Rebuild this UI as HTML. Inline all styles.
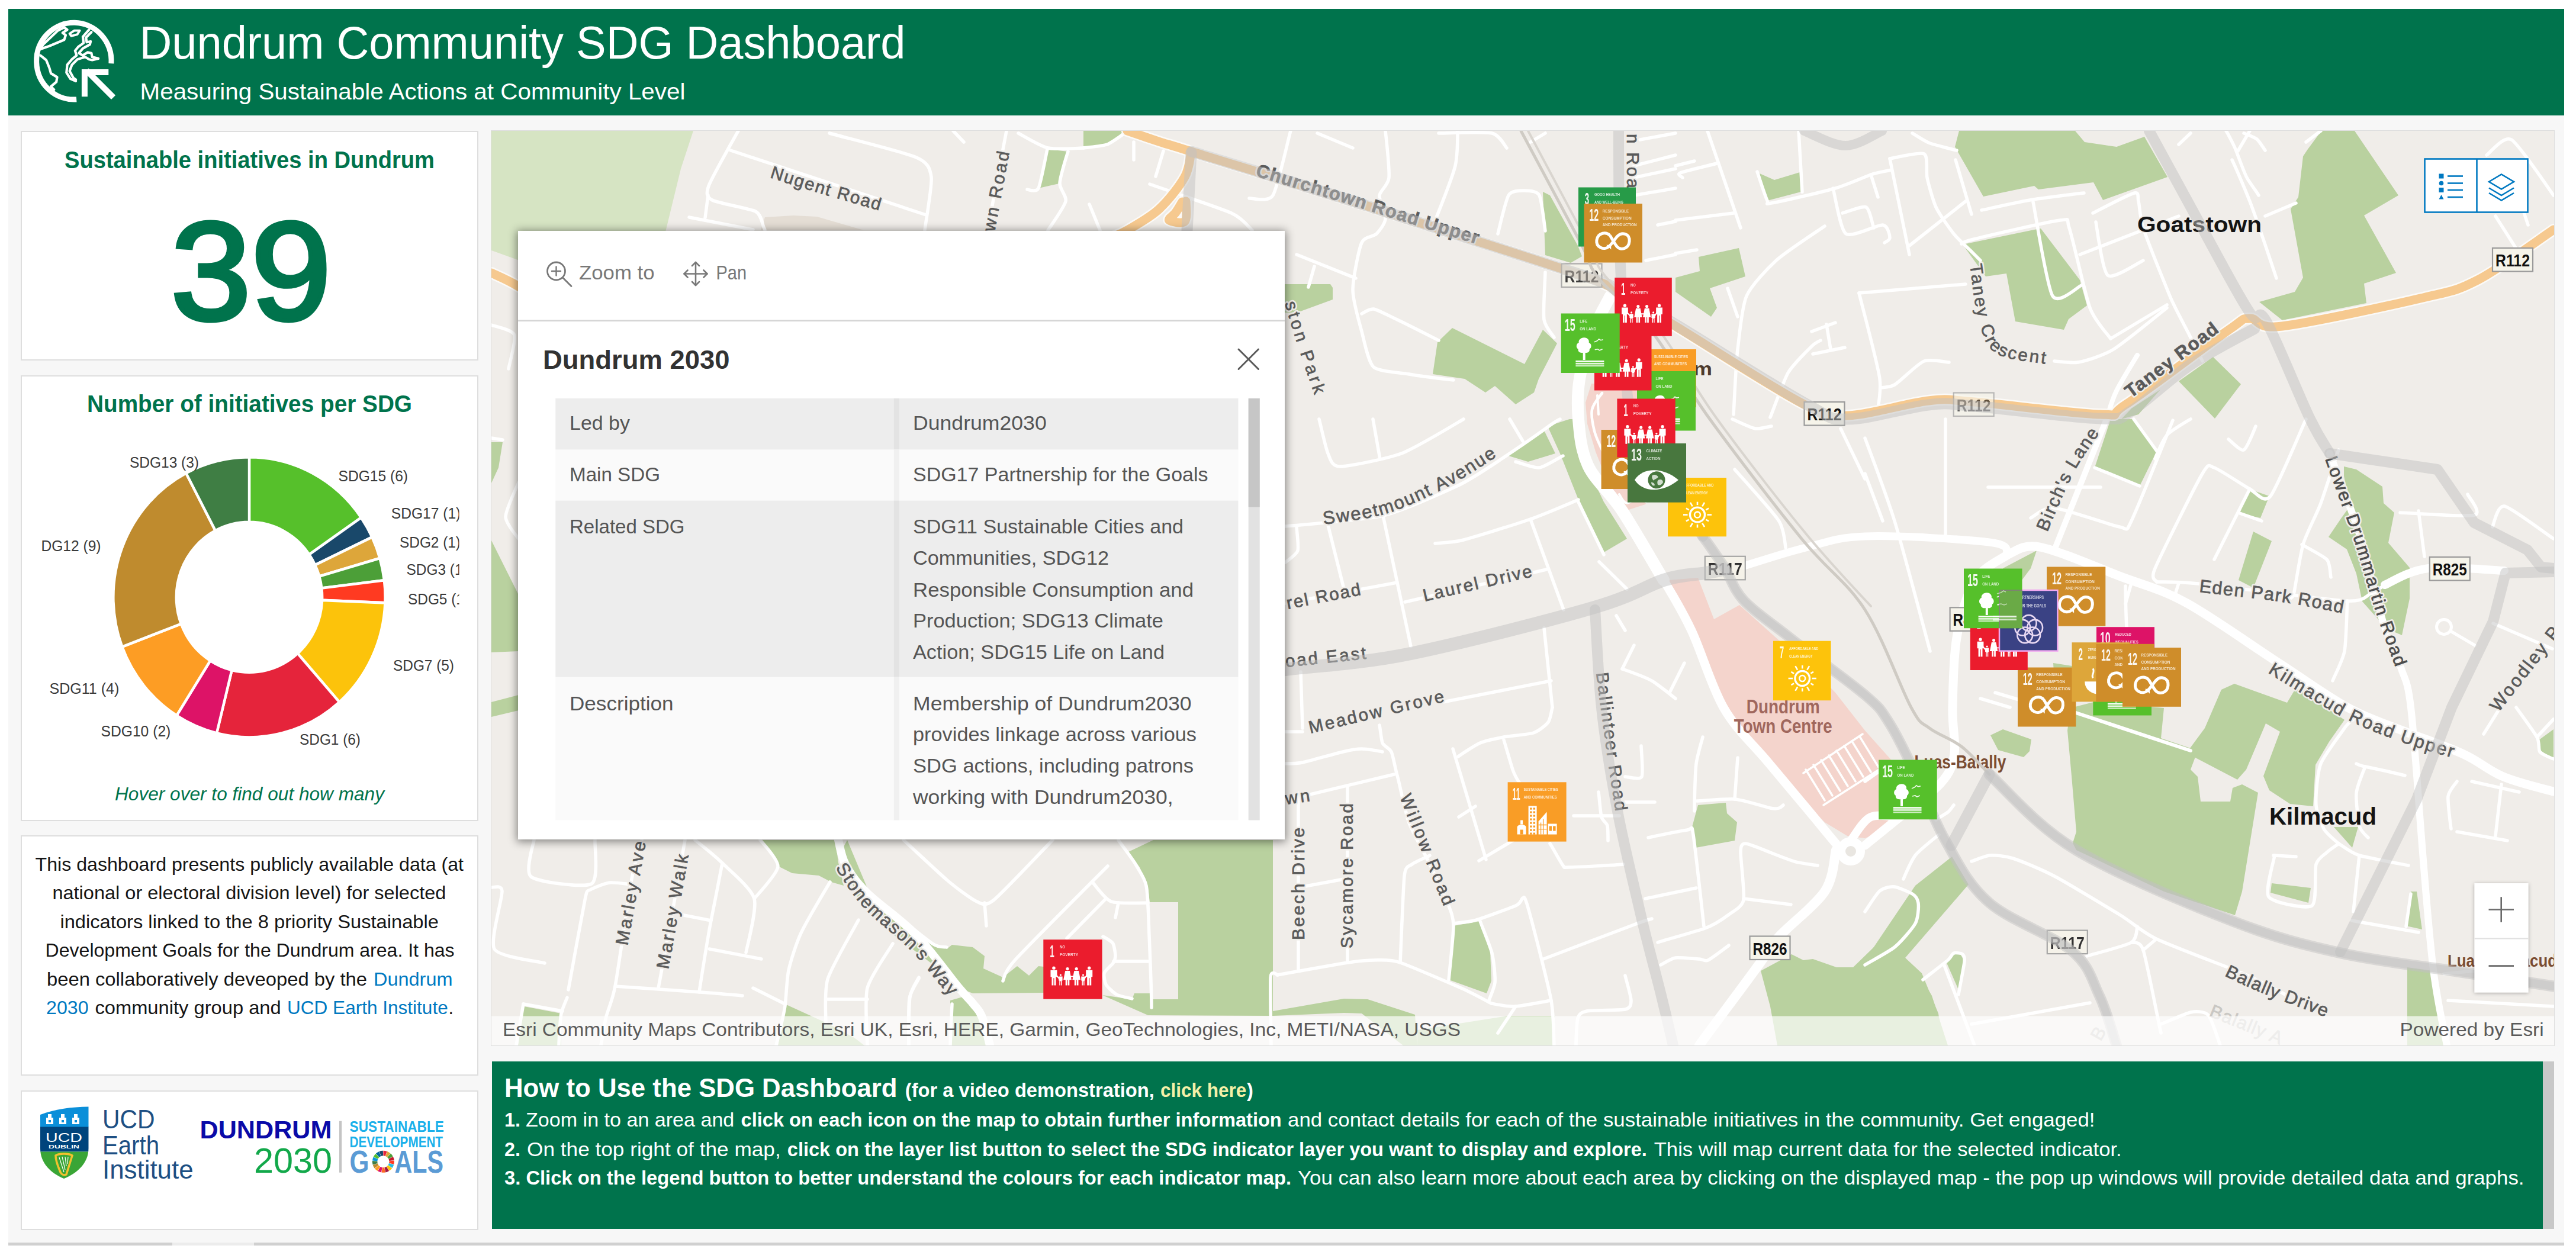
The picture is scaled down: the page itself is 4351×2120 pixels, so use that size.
<!DOCTYPE html><html lang="en"><head><meta charset="utf-8"><title>Dundrum Community SDG Dashboard</title><style>html,body{margin:0;padding:0;background:#fff}
body{width:4351px;height:2120px;font-family:"Liberation Sans",sans-serif}
#page{position:relative;width:4351px;height:2120px;overflow:hidden;background:#fff}
#dash{position:absolute;left:14px;top:15px;width:4317px;height:2084px;background:#f7f7f7}
.card{position:absolute;background:#fff;border:2px solid #dedede}
svg text{font-family:"Liberation Sans",sans-serif;white-space:pre}
</style></head><body>
<div id="page">
<div id="dash"></div>
<div id="hdr" style="position:absolute;left:14px;top:15px;width:4317px;height:180px;background:#00734c"></div>
<svg style="position:absolute;left:0;top:0" width="4351" height="200" viewBox="0 0 4351 200"><path d="M187.9,107.2 A63.2,64.9 0 1 0 129.2,167.9" fill="none" stroke="#fff" stroke-width="9"/><g fill="none" stroke="#fff" stroke-width="4.2" stroke-linecap="round" stroke-linejoin="round"><polygon points="72.9,75.2 97.8,51.6 108.4,46.3 113.6,50.2 105.7,55.5 111.0,59.4 108.4,67.3 83.4,77.8 68.3,83.1"/><polygon points="117.6,56.8 125.5,51.6 134.7,51.6 130.7,58.1 120.2,60.8" stroke-width="3.8"/><polyline points="150.4,50.2 139.9,62.1 141.2,72.6 132.0,79.2 126.8,85.7 129.4,93.6 121.5,100.2 113.6,109.4 112.3,122.6 118.9,133.1 128.1,137.0"/><polyline points="154.4,54.2 145.2,63.4 146.5,71.3 153.1,70.0 151.8,75.2 139.9,81.8 133.3,89.7 139.9,93.6 147.8,88.4 154.4,89.7 155.7,96.3 166.2,98.9 155.7,101.5 150.4,100.2 143.9,96.3 130.7,100.2 121.5,109.4 117.6,119.9 124.1,131.8 128.1,134.4"/><polyline points="68.3,93.6 78.1,101.5 83.4,114.7 86.0,123.9 96.5,130.4 95.2,138.3 86.0,146.2 91.3,151.5"/></g><g fill="none" stroke="#fff" stroke-width="10" stroke-linecap="butt" stroke-linejoin="miter"><path d="M191.5,164.5 L146,119"/><path d="M183.3,121.9 L142.9,121.9 L142.9,163.3"/></g><text x="235.5" y="98.8" font-size="78" fill="#fff" textLength="1294.0" lengthAdjust="spacingAndGlyphs">Dundrum Community SDG Dashboard</text><text x="236.5" y="167.7" font-size="39.5" fill="#fff" textLength="921.0" lengthAdjust="spacingAndGlyphs">Measuring Sustainable Actions at Community Level</text></svg>
<div id="c1" class="card" style="left:35px;top:221px;width:769px;height:384px"></div>
<div id="c2" class="card" style="left:35px;top:634px;width:769px;height:749px"></div>
<div id="c3" class="card" style="left:35px;top:1411px;width:769px;height:402px"></div>
<div id="c4" class="card" style="left:35px;top:1842px;width:769px;height:232px"></div>
<svg style="position:absolute;left:0;top:200px" width="830" height="1920" viewBox="0 200 830 1920"><text x="109.0" y="284.0" font-size="40" fill="#00734c" font-weight="700" textLength="625.0" lengthAdjust="spacingAndGlyphs">Sustainable initiatives in Dundrum</text><text x="288.5" y="539.5" font-size="236" fill="#00734c" textLength="271.0" lengthAdjust="spacingAndGlyphs" stroke="#00734c" stroke-width="7">39</text><text x="147.0" y="695.5" font-size="40" fill="#00734c" font-weight="700" textLength="549.0" lengthAdjust="spacingAndGlyphs">Number of initiatives per SDG</text><clipPath id="dclip"><rect x="69" y="740" width="706.5" height="560"/></clipPath><g clip-path="url(#dclip)"><g transform="translate(421,1008.8) scale(0.9854,1.0155)"><path d="M0.0,-233.0 A233,233 0 0 1 191.8,-132.4 L102.9,-71.0 A125,125 0 0 0 0.0,-125.0 Z" fill="#56c02b" stroke="#fff" stroke-width="4.5" stroke-linejoin="round"/><path d="M191.8,-132.4 A233,233 0 0 1 210.5,-99.9 L112.9,-53.6 A125,125 0 0 0 102.9,-71.0 Z" fill="#19486a" stroke="#fff" stroke-width="4.5" stroke-linejoin="round"/><path d="M210.5,-99.9 A233,233 0 0 1 223.8,-64.8 L120.1,-34.8 A125,125 0 0 0 112.9,-53.6 Z" fill="#dda63a" stroke="#fff" stroke-width="4.5" stroke-linejoin="round"/><path d="M223.8,-64.8 A233,233 0 0 1 231.3,-28.1 L124.1,-15.1 A125,125 0 0 0 120.1,-34.8 Z" fill="#4c9f38" stroke="#fff" stroke-width="4.5" stroke-linejoin="round"/><path d="M231.3,-28.1 A233,233 0 0 1 232.8,9.4 L124.9,5.0 A125,125 0 0 0 124.1,-15.1 Z" fill="#ff3a21" stroke="#fff" stroke-width="4.5" stroke-linejoin="round"/><path d="M232.8,9.4 A233,233 0 0 1 154.5,174.4 L82.9,93.6 A125,125 0 0 0 124.9,5.0 Z" fill="#fcc30b" stroke="#fff" stroke-width="4.5" stroke-linejoin="round"/><path d="M154.5,174.4 A233,233 0 0 1 -55.8,226.2 L-29.9,121.4 A125,125 0 0 0 82.9,93.6 Z" fill="#e5243b" stroke="#fff" stroke-width="4.5" stroke-linejoin="round"/><path d="M-55.8,226.2 A233,233 0 0 1 -124.5,196.9 L-66.8,105.6 A125,125 0 0 0 -29.9,121.4 Z" fill="#dd1367" stroke="#fff" stroke-width="4.5" stroke-linejoin="round"/><path d="M-124.5,196.9 A233,233 0 0 1 -217.9,82.6 L-116.9,44.3 A125,125 0 0 0 -66.8,105.6 Z" fill="#fd9d24" stroke="#fff" stroke-width="4.5" stroke-linejoin="round"/><path d="M-217.9,82.6 A233,233 0 0 1 -108.3,-206.3 L-58.1,-110.7 A125,125 0 0 0 -116.9,44.3 Z" fill="#bf8b2e" stroke="#fff" stroke-width="4.5" stroke-linejoin="round"/><path d="M-108.3,-206.3 A233,233 0 0 1 -0.0,-233.0 L-0.0,-125.0 A125,125 0 0 0 -58.1,-110.7 Z" fill="#3f7e44" stroke="#fff" stroke-width="4.5" stroke-linejoin="round"/></g><text x="219.0" y="789.6" font-size="25" fill="#3a3a3a" textLength="117.0" lengthAdjust="spacingAndGlyphs">SDG13 (3)</text><text x="571.5" y="813.0" font-size="25" fill="#3a3a3a" textLength="117.5" lengthAdjust="spacingAndGlyphs">SDG15 (6)</text><text x="660.8" y="876.0" font-size="25" fill="#3a3a3a" textLength="117.5" lengthAdjust="spacingAndGlyphs">SDG17 (1)</text><text x="675.0" y="924.5" font-size="25" fill="#3a3a3a" textLength="103.0" lengthAdjust="spacingAndGlyphs">SDG2 (1)</text><text x="686.6" y="970.7" font-size="25" fill="#3a3a3a" textLength="103.0" lengthAdjust="spacingAndGlyphs">SDG3 (1)</text><text x="689.0" y="1021.0" font-size="25" fill="#3a3a3a" textLength="103.0" lengthAdjust="spacingAndGlyphs">SDG5 (1)</text><text x="53.0" y="931.0" font-size="25" fill="#3a3a3a" textLength="117.5" lengthAdjust="spacingAndGlyphs">SDG12 (9)</text><text x="664.0" y="1133.0" font-size="25" fill="#3a3a3a" textLength="103.0" lengthAdjust="spacingAndGlyphs">SDG7 (5)</text><text x="83.5" y="1172.4" font-size="25" fill="#3a3a3a" textLength="117.8" lengthAdjust="spacingAndGlyphs">SDG11 (4)</text><text x="170.5" y="1244.4" font-size="25" fill="#3a3a3a" textLength="117.8" lengthAdjust="spacingAndGlyphs">SDG10 (2)</text><text x="506.0" y="1257.8" font-size="25" fill="#3a3a3a" textLength="103.0" lengthAdjust="spacingAndGlyphs">SDG1 (6)</text></g><text x="194.0" y="1352.0" font-size="31.5" fill="#00734c" font-style="italic" textLength="455.0" lengthAdjust="spacingAndGlyphs">Hover over to find out how many</text><text x="59.5" y="1470.8" font-size="30.5" fill="#151515" textLength="723.5" lengthAdjust="spacingAndGlyphs">This dashboard presents publicly available data (at</text><text x="88.4" y="1519.0" font-size="30.5" fill="#151515" textLength="665.0" lengthAdjust="spacingAndGlyphs">national or electoral division level) for selected</text><text x="101.4" y="1567.7" font-size="30.5" fill="#151515" textLength="639.6" lengthAdjust="spacingAndGlyphs">indicators linked to the 8 priority Sustainable</text><text x="76.6" y="1615.8" font-size="30.5" fill="#151515" textLength="691.0" lengthAdjust="spacingAndGlyphs">Development Goals for the Dundrum area. It has</text><text x="79.0" y="1664.6" font-size="30.5" fill="#151515" textLength="541.0" lengthAdjust="spacingAndGlyphs">been collaboratively deveoped by the</text><text x="631.0" y="1664.6" font-size="30.5" fill="#0079c1" textLength="133.5" lengthAdjust="spacingAndGlyphs">Dundrum</text><text x="78.0" y="1713.0" font-size="30.5" fill="#0079c1" textLength="71.6" lengthAdjust="spacingAndGlyphs">2030</text><text x="160.4" y="1713.0" font-size="30.5" fill="#151515" textLength="314.3" lengthAdjust="spacingAndGlyphs">community group and</text><text x="485.0" y="1713.0" font-size="30.5" fill="#0079c1" textLength="271.7" lengthAdjust="spacingAndGlyphs">UCD Earth Institute</text><text x="757.5" y="1713.0" font-size="30.5" fill="#151515">.</text><clipPath id="shc"><path d="M68,1883 C95,1873 120,1870 149.5,1869.5 L149.5,1940 C149.5,1965 130,1982 108,1991 C86,1982 68,1965 68,1940 Z"/></clipPath><g clip-path="url(#shc)"><rect x="66" y="1866" width="86" height="38" fill="#0b8fd9"/><rect x="66" y="1903.5" width="86" height="42" fill="#00447c"/><rect x="66" y="1945.5" width="86" height="48" fill="#3aa536"/></g><rect x="78" y="1888" width="12" height="11" fill="#fff"/><rect x="81" y="1882" width="6" height="7" fill="#fff"/><rect x="82" y="1892" width="4" height="4" fill="#0b8fd9"/><rect x="100" y="1888" width="12" height="11" fill="#fff"/><rect x="103" y="1882" width="6" height="7" fill="#fff"/><rect x="104" y="1892" width="4" height="4" fill="#0b8fd9"/><rect x="122" y="1888" width="12" height="11" fill="#fff"/><rect x="125" y="1882" width="6" height="7" fill="#fff"/><rect x="126" y="1892" width="4" height="4" fill="#0b8fd9"/><text x="77.0" y="1929.0" font-size="22" fill="#fff" textLength="62.0" lengthAdjust="spacingAndGlyphs">UCD</text><text x="82.0" y="1940.0" font-size="8.5" fill="#fff" font-weight="700" textLength="52.0" lengthAdjust="spacingAndGlyphs">DUBLIN</text><path d="M94,1952 C100,1948 116,1948 122,1952 L112,1984 C108,1986 104,1984 102,1980 C98,1970 94,1962 94,1952 Z" fill="none" stroke="#f2c12e" stroke-width="3.5"/><path d="M100,1955 L108,1980 M105,1954 L110,1976 M110,1954 L112,1970 M115,1954 L114,1966" stroke="#fff" stroke-width="1.2" fill="none"/><text x="173.0" y="1906.0" font-size="45" fill="#1d4f83" textLength="88.5" lengthAdjust="spacingAndGlyphs">UCD</text><text x="173.0" y="1949.6" font-size="45" fill="#1d4f83" textLength="96.0" lengthAdjust="spacingAndGlyphs">Earth</text><text x="173.0" y="1990.9" font-size="45" fill="#1d4f83" textLength="153.6" lengthAdjust="spacingAndGlyphs">Institute</text><text x="337.5" y="1923.0" font-size="42" fill="#0a0aa8" font-weight="700" textLength="223.0" lengthAdjust="spacingAndGlyphs">DUNDRUM</text><text x="429.0" y="1980.6" font-size="59" fill="#12a84a" textLength="132.0" lengthAdjust="spacingAndGlyphs">2030</text><rect x="573" y="1893.7" width="4.2" height="87" fill="#c4c4c4"/><text x="590.6" y="1912.3" font-size="26.5" fill="#1ab0ea" font-weight="700" textLength="159.3" lengthAdjust="spacingAndGlyphs">SUSTAINABLE</text><text x="590.6" y="1938.0" font-size="26.5" fill="#1ab0ea" font-weight="700" textLength="157.4" lengthAdjust="spacingAndGlyphs">DEVELOPMENT</text><text x="590.6" y="1980.6" font-size="53" fill="#5b9bd5" font-weight="700" textLength="33.0" lengthAdjust="spacingAndGlyphs">G</text><text x="666.5" y="1980.6" font-size="53" fill="#5b9bd5" font-weight="700" textLength="82.5" lengthAdjust="spacingAndGlyphs">ALS</text><path d="M647.4,1943.8 A18.5,18.5 0 0 1 653.6,1944.9 L650.7,1952.9 A10,10 0 0 0 647.4,1952.3 Z" fill="#e5243b"/><path d="M654.1,1945.0 A18.5,18.5 0 0 1 659.4,1948.3 L653.9,1954.7 A10,10 0 0 0 651.0,1953.0 Z" fill="#dda63a"/><path d="M659.9,1948.6 A18.5,18.5 0 0 1 663.7,1953.6 L656.2,1957.6 A10,10 0 0 0 654.1,1954.9 Z" fill="#4c9f38"/><path d="M664.0,1954.1 A18.5,18.5 0 0 1 665.8,1960.0 L657.3,1961.1 A10,10 0 0 0 656.4,1957.8 Z" fill="#c5192d"/><path d="M665.8,1960.6 A18.5,18.5 0 0 1 665.3,1966.8 L657.1,1964.7 A10,10 0 0 0 657.4,1961.4 Z" fill="#ff3a21"/><path d="M665.2,1967.4 A18.5,18.5 0 0 1 662.5,1973.0 L655.6,1968.1 A10,10 0 0 0 657.0,1965.0 Z" fill="#26bde2"/><path d="M662.2,1973.4 A18.5,18.5 0 0 1 657.6,1977.7 L652.9,1970.6 A10,10 0 0 0 655.4,1968.3 Z" fill="#fcc30b"/><path d="M657.1,1978.0 A18.5,18.5 0 0 1 651.3,1980.4 L649.5,1972.1 A10,10 0 0 0 652.7,1970.8 Z" fill="#a21942"/><path d="M650.8,1980.5 A18.5,18.5 0 0 1 644.5,1980.6 L645.9,1972.2 A10,10 0 0 0 649.2,1972.1 Z" fill="#fd6925"/><path d="M644.0,1980.5 A18.5,18.5 0 0 1 638.1,1978.3 L642.4,1971.0 A10,10 0 0 0 645.6,1972.1 Z" fill="#dd1367"/><path d="M637.7,1978.0 A18.5,18.5 0 0 1 633.0,1973.9 L639.6,1968.6 A10,10 0 0 0 642.1,1970.8 Z" fill="#fd9d24"/><path d="M632.6,1973.4 A18.5,18.5 0 0 1 629.8,1967.9 L637.9,1965.3 A10,10 0 0 0 639.4,1968.3 Z" fill="#bf8b2e"/><path d="M629.6,1967.4 A18.5,18.5 0 0 1 628.9,1961.1 L637.4,1961.7 A10,10 0 0 0 637.8,1965.0 Z" fill="#3f7e44"/><path d="M629.0,1960.6 A18.5,18.5 0 0 1 630.6,1954.6 L638.3,1958.1 A10,10 0 0 0 637.4,1961.4 Z" fill="#0a97d9"/><path d="M630.8,1954.1 A18.5,18.5 0 0 1 634.5,1949.0 L640.4,1955.1 A10,10 0 0 0 638.4,1957.8 Z" fill="#56c02b"/><path d="M634.9,1948.6 A18.5,18.5 0 0 1 640.2,1945.3 L643.5,1953.1 A10,10 0 0 0 640.7,1954.9 Z" fill="#00689d"/><path d="M640.7,1945.0 A18.5,18.5 0 0 1 646.8,1943.8 L647.1,1952.3 A10,10 0 0 0 643.8,1953.0 Z" fill="#19486a"/></svg>
<div id="map" style="position:absolute;left:830px;top:221px;width:3484px;height:1545px;overflow:hidden;background:#f0ede9;outline:2px solid #dedede;outline-offset:-1px"><svg style="position:absolute;left:0;top:0" width="3484" height="1545" viewBox="830 221 3484 1545"><defs><filter id="zsh" x="-20%" y="-10%" width="140%" height="120%"><feDropShadow dx="0" dy="1" stdDeviation="3" flood-color="#000" flood-opacity=".3"/></filter></defs><rect x="830" y="221" width="3484" height="1545" fill="#f0ede9"/><polygon points="830,221 1171,221 1150,285 1122,400 1100,520 830,423" fill="#d6e4c3" /><polygon points="830,747 849,747 842,790 830,816" fill="#b9d19f" /><polygon points="830,913 876,1005 876,1100 830,1102" fill="#b9d19f" /><polygon points="830,1186 876,1174 876,1200 830,1211" fill="#b9d19f" /><polygon points="1769,252 1804,256 1789,310 1754,318" fill="#b9d19f" /><polygon points="1830,221 1898,221 1885,236 1869,244 1830,248" fill="#b9d19f" /><polygon points="2160,480 2247,480 2251,486 2251,506 2191,528 2160,528" fill="#b9d19f" /><polygon points="2453,554 2575,615 2606,557 2630,580 2599,640 2591,663 2560,683 2525,652 2509,663 2474,640 2420,632 2428,578" fill="#b9d19f" /><polygon points="2606,324 2618,330 2665,415 2672,433 2653,444 2610,431" fill="#b9d19f" /><polygon points="3309,221 3302,248 3350,332 3436,314 3443,320 3536,308 3552,338 3661,299 3622,231 3575,248 3521,240 3505,221" fill="#b9d19f" /><polygon points="3315,413 3436,388 3447,386 3513,473 3525,516 3494,539 3486,557 3404,543 3389,462 3354,467" fill="#b9d19f" /><polygon points="2972,293 2997,304 3040,291 3042,324 2985,339" fill="#b9d19f" /><polygon points="2869,434 2937,419 2948,467 2888,487 2900,520 2890,535 2830,493 2830,469 2871,458" fill="#b9d19f" /><polygon points="3738,603 3785,649 3741,707 3680,644" fill="#b9d19f" /><polygon points="3649,658 3612,700 3583,708 3600,690" fill="#b9d19f" /><polygon points="3921,221 3977,221 4051,330 3993,364 4047,461 3993,479 3997,512 3855,541 3816,510 3876,493 3890,469 3869,353 3882,333 3890,264 3898,252" fill="#b9d19f" /><polygon points="2614,720 2651,708 2662,708 2666,758 2709,848 2748,910 2709,933 2666,844 2635,766" fill="#b9d19f" /><polygon points="2548,770 2608,727 2627,766 2581,780" fill="#b9d19f" /><polygon points="3565,708 3604,708 3643,762 3614,821 3538,790" fill="#b9d19f" /><polygon points="3798,826 3833,838 3818,875 3783,867" fill="#b9d19f" /><polygon points="3806,898 3837,914 3806,993 3781,980" fill="#b9d19f" /><polygon points="3959,788 3980,793 4024,822 4026,850 4044,866 4034,917 4070,959 4070,1011 4057,1073 4031,1062 3990,1016 3980,969 3964,928 3933,907 3954,876 3969,855 3959,804" fill="#b9d19f" /><polygon points="3383,960 3440,930 3430,960 3400,1000" fill="#b9d19f" /><polygon points="3497,1196 3540,1185 3655,1196 3650,1247 3712,1268 3700,1300 3712,1312 3717,1354 3767,1354 3771,1331 3787,1325 3814,1339 3787,1506 3775,1546 3655,1506 3507,1436 3501,1424 3507,1405 3499,1311 3492,1234" fill="#b9d19f" /><polygon points="3724,1230 3752,1165 3774,1155 3863,1187 3878,1162 3960,1216 3934,1253 3911,1292 3907,1362 3868,1358 3833,1335 3823,1311 3851,1236 3827,1222 3794,1300 3779,1317 3693,1272" fill="#b9d19f" /><polygon points="3468,1120 3500,1125 3500,1150 3470,1150" fill="#b9d19f" /><polygon points="3362,1242 3383,1232 3431,1249 3428,1269 3418,1279 3375,1267" fill="#b9d19f" /><polygon points="3235,1496 3297,1447 3325,1494 3218,1618 3247,1655 3263,1682 3290,1766 3150,1766 3150,1622" fill="#b9d19f" /><polygon points="3286,1622 3309,1608 3317,1622 3309,1674" fill="#b9d19f" /><polygon points="3837,1492 3903,1500 3899,1525 3835,1508" fill="#b9d19f" /><polygon points="3942,1397 3983,1397 3973,1432" fill="#b9d19f" /><polygon points="4072,1506 4082,1506 4091,1570 4064,1564" fill="#b9d19f" /><polygon points="4066,1634 4109,1640 4128,1766 4066,1766" fill="#b9d19f" /><polygon points="4287,1251 4313,1232 4313,1281 4291,1270" fill="#b9d19f" /><polygon points="2455,1564 2499,1556 2517,1606 2519,1657 2511,1678 2447,1655" fill="#b9d19f" /><polygon points="2868,1360 2915,1356 2917,1374 2934,1389 2930,1420 2864,1432 2858,1397" fill="#b9d19f" /><polygon points="2974,1640 3026,1612 3046,1622 3062,1620 3102,1634 3130,1634 3165,1600 3218,1618 3246,1644 3274,1712 3282,1766 3002,1766 2990,1700" fill="#b9d19f" /><polygon points="885,1700 948,1712 948,1766 875,1766" fill="#b9d19f" /><polygon points="1328,1697 1398,1729 1443,1753 1460,1766 1314,1766" fill="#b9d19f" /><polygon points="1287,1419 1316,1464 1338,1475 1383,1479 1404,1490 1425,1496 1416,1457 1411,1419" fill="#b9d19f" /><polygon points="1431,1419 1467,1505 1562,1591 1600,1603 1600,1625 1540,1600 1450,1520 1420,1440" fill="#b9d19f" /><polygon points="1500,1540 1575,1597 1599,1603 1608,1596 1643,1600 1663,1615 1661,1636 1694,1651 1718,1632 1738,1648 1754,1632 1763,1633 1763,1677 1643,1678 1620,1669 1590,1640 1500,1572" fill="#b9d19f" /><polygon points="1605,1690 1640,1680 1668,1766 1605,1766" fill="#b9d19f" /><polygon points="1906,1439 1948,1419 2150,1419 2150,1708 2270,1687 2310,1688 2390,1714 2394,1766 2370,1766 2300,1712 2270,1711 2150,1716 1939,1715 1862,1681 1912,1688 1916,1678 1945,1678 1945,1688 1990,1688 1990,1524 1942,1524 1939,1500 1925,1465" fill="#b9d19f" /><polygon points="2394,1740 2546,1716 2626,1716 2626,1766 2394,1766" fill="#b9d19f" /><polygon points="2688,648 2800,648 2805,800 2779,852 2745,863 2719,823 2695,763 2681,716 2678,680" fill="#f4d4cc" /><path d="M2706,664C2703,669 2691,681 2689,692C2687,703 2690,716 2693,728C2696,740 2702,752 2708,764C2714,776 2726,794 2730,800" fill="none" stroke="#fff" stroke-width="4.5" stroke-linejoin="round" stroke-linecap="round" /><polyline points="2698,668 2700,700" fill="none" stroke="#fff" stroke-width="4" stroke-linejoin="round" stroke-linecap="round" /><path d="M2735,835C2737,838 2742,850 2748,850C2754,850 2765,838 2770,838C2775,838 2778,846 2780,848" fill="none" stroke="#fff" stroke-width="4" stroke-linejoin="round" stroke-linecap="round" /><polygon points="2818,980 2868,976 2895,1046 2938,1022 3004,1081 3043,1112 3100,1170 3150,1234 3200,1290 3230,1330 3190,1400 3150,1416 3120,1412 3082,1389 3043,1350 2985,1288 2911,1195 2860,1069" fill="#f4d4cc" /><polyline points="3050,1300 3082,1352" fill="none" stroke="#fff" stroke-width="3.5" stroke-linejoin="round" stroke-linecap="round" /><polyline points="3063,1292 3095,1344" fill="none" stroke="#fff" stroke-width="3.5" stroke-linejoin="round" stroke-linecap="round" /><polyline points="3076,1284 3108,1336" fill="none" stroke="#fff" stroke-width="3.5" stroke-linejoin="round" stroke-linecap="round" /><polyline points="3089,1276 3121,1328" fill="none" stroke="#fff" stroke-width="3.5" stroke-linejoin="round" stroke-linecap="round" /><polyline points="3102,1268 3134,1320" fill="none" stroke="#fff" stroke-width="3.5" stroke-linejoin="round" stroke-linecap="round" /><polyline points="3115,1260 3147,1312" fill="none" stroke="#fff" stroke-width="3.5" stroke-linejoin="round" stroke-linecap="round" /><polyline points="3128,1252 3160,1304" fill="none" stroke="#fff" stroke-width="3.5" stroke-linejoin="round" stroke-linecap="round" /><polyline points="3141,1244 3173,1296" fill="none" stroke="#fff" stroke-width="3.5" stroke-linejoin="round" stroke-linecap="round" /><polyline points="3046,1306 3146,1240" fill="none" stroke="#fff" stroke-width="3.5" stroke-linejoin="round" stroke-linecap="round" /><polyline points="3080,1360 3180,1296" fill="none" stroke="#fff" stroke-width="3.5" stroke-linejoin="round" stroke-linecap="round" /><polygon points="1292,367 1340,364 1380,366 1459,389 1285,389" fill="#e4ddd4" /><polyline points="1234,254 1564,363" fill="none" stroke="#fff" stroke-width="5.5" stroke-linejoin="round" stroke-linecap="round" /><path d="M1247,221C1241,232 1202,300 1197,314C1192,328 1194,333 1203,338C1212,343 1266,352 1276,357C1286,362 1288,380 1290,384C1292,388 1292,388 1292,389" fill="none" stroke="#fff" stroke-width="5.5" stroke-linejoin="round" stroke-linecap="round" /><polyline points="1196,330 1191,368" fill="none" stroke="#fff" stroke-width="5.5" stroke-linejoin="round" stroke-linecap="round" /><polyline points="1164,367 1272,388" fill="none" stroke="#fff" stroke-width="5.5" stroke-linejoin="round" stroke-linecap="round" /><path d="M1401,225C1418,230 1528,257 1548,266C1568,275 1571,285 1573,299C1575,313 1563,378 1562,389" fill="none" stroke="#fff" stroke-width="5.5" stroke-linejoin="round" stroke-linecap="round" /><polyline points="1700,221 1668,389" fill="none" stroke="#fff" stroke-width="5.5" stroke-linejoin="round" stroke-linecap="round" /><path d="M1769,252C1767,260 1758,310 1754,318C1750,326 1737,320 1735,320" fill="none" stroke="#fff" stroke-width="5.5" stroke-linejoin="round" stroke-linecap="round" /><path d="M1804,256C1802,262 1790,300 1790,310C1790,320 1802,331 1800,340C1798,349 1774,383 1770,389" fill="none" stroke="#fff" stroke-width="5.5" stroke-linejoin="round" stroke-linecap="round" /><path d="M1720,225C1726,228 1757,247 1770,250C1783,253 1823,250 1830,250" fill="none" stroke="#fff" stroke-width="5.5" stroke-linejoin="round" stroke-linecap="round" /><polyline points="1610,221 1628,240" fill="none" stroke="#fff" stroke-width="5.5" stroke-linejoin="round" stroke-linecap="round" /><path d="M830,549C835,551 866,557 869,566C872,575 860,616 859,623" fill="none" stroke="#fff" stroke-width="5.5" stroke-linejoin="round" stroke-linecap="round" /><polyline points="830,740 849,743" fill="none" stroke="#fff" stroke-width="5.5" stroke-linejoin="round" stroke-linecap="round" /><path d="M876,815C873,822 854,862 854,873C854,884 873,906 876,910" fill="none" stroke="#fff" stroke-width="5.5" stroke-linejoin="round" stroke-linecap="round" /><path d="M1830,250C1835,249 1862,247 1870,244C1878,241 1896,227 1900,225" fill="none" stroke="#fff" stroke-width="5.5" stroke-linejoin="round" stroke-linecap="round" /><polyline points="1915,240 1915,270" fill="none" stroke="#fff" stroke-width="5.5" stroke-linejoin="round" stroke-linecap="round" /><polyline points="1965,255 1952,298" fill="none" stroke="#fff" stroke-width="5.5" stroke-linejoin="round" stroke-linecap="round" /><path d="M1942,311C1958,317 2060,351 2080,360C2100,369 2111,386 2115,389" fill="none" stroke="#fff" stroke-width="5.5" stroke-linejoin="round" stroke-linecap="round" /><polyline points="1840,345 1858,389" fill="none" stroke="#fff" stroke-width="5.5" stroke-linejoin="round" stroke-linecap="round" /><path d="M2180,221C2176,234 2158,317 2150,330C2142,343 2115,334 2110,335" fill="none" stroke="#fff" stroke-width="5.5" stroke-linejoin="round" stroke-linecap="round" /><polyline points="2225,225 2285,250" fill="none" stroke="#fff" stroke-width="5.5" stroke-linejoin="round" stroke-linecap="round" /><path d="M2340,221C2341,230 2347,287 2346,300C2345,313 2331,322 2330,330C2329,338 2341,362 2340,370C2339,378 2330,390 2325,395C2320,400 2305,399 2300,410C2295,421 2285,472 2285,490C2285,508 2296,545 2300,560C2304,575 2311,612 2320,620C2329,628 2364,629 2380,632C2396,635 2446,641 2455,642" fill="none" stroke="#fff" stroke-width="5.5" stroke-linejoin="round" stroke-linecap="round" /><path d="M2300,530C2302,529 2313,521 2320,522C2327,523 2347,534 2360,540C2373,546 2422,571 2430,575" fill="none" stroke="#fff" stroke-width="5.5" stroke-linejoin="round" stroke-linecap="round" /><polyline points="2190,430 2290,470" fill="none" stroke="#fff" stroke-width="5.5" stroke-linejoin="round" stroke-linecap="round" /><polyline points="2220,450 2210,485" fill="none" stroke="#fff" stroke-width="5.5" stroke-linejoin="round" stroke-linecap="round" /><path d="M2430,225C2440,225 2507,222 2520,225C2533,228 2542,247 2545,250" fill="none" stroke="#fff" stroke-width="5.5" stroke-linejoin="round" stroke-linecap="round" /><path d="M2462,221C2462,228 2462,263 2458,280C2454,297 2429,360 2425,370" fill="none" stroke="#fff" stroke-width="5.5" stroke-linejoin="round" stroke-linecap="round" /><path d="M2530,395C2532,387 2543,339 2548,330C2553,321 2569,322 2575,322C2581,322 2596,322 2600,330C2604,338 2609,383 2610,390" fill="none" stroke="#fff" stroke-width="5.5" stroke-linejoin="round" stroke-linecap="round" /><path d="M2610,460C2610,469 2606,527 2608,540C2610,553 2623,566 2625,570" fill="none" stroke="#fff" stroke-width="5.5" stroke-linejoin="round" stroke-linecap="round" /><polyline points="2585,240 2610,225" fill="none" stroke="#fff" stroke-width="5.5" stroke-linejoin="round" stroke-linecap="round" /><polyline points="2760,280 2830,262" fill="none" stroke="#fff" stroke-width="5.5" stroke-linejoin="round" stroke-linecap="round" /><polyline points="2760,300 2830,285" fill="none" stroke="#fff" stroke-width="5.5" stroke-linejoin="round" stroke-linecap="round" /><polyline points="2760,330 2830,318" fill="none" stroke="#fff" stroke-width="5.5" stroke-linejoin="round" stroke-linecap="round" /><polyline points="2800,380 2830,374" fill="none" stroke="#fff" stroke-width="5.5" stroke-linejoin="round" stroke-linecap="round" /><polyline points="2780,440 2830,430" fill="none" stroke="#fff" stroke-width="5.5" stroke-linejoin="round" stroke-linecap="round" /><polyline points="2770,236 2830,225" fill="none" stroke="#fff" stroke-width="5.5" stroke-linejoin="round" stroke-linecap="round" /><polyline points="2884,221 2940,385" fill="none" stroke="#fff" stroke-width="5.5" stroke-linejoin="round" stroke-linecap="round" /><polyline points="2830,280 2862,272" fill="none" stroke="#fff" stroke-width="5.5" stroke-linejoin="round" stroke-linecap="round" /><path d="M2842,300C2842,299 2831,295 2838,292C2845,289 2893,278 2900,276" fill="none" stroke="#fff" stroke-width="5.5" stroke-linejoin="round" stroke-linecap="round" /><polyline points="2830,372 2928,360" fill="none" stroke="#fff" stroke-width="5.5" stroke-linejoin="round" stroke-linecap="round" /><polyline points="2830,428 2866,422" fill="none" stroke="#fff" stroke-width="5.5" stroke-linejoin="round" stroke-linecap="round" /><polyline points="3038,221 3044,324" fill="none" stroke="#fff" stroke-width="5.5" stroke-linejoin="round" stroke-linecap="round" /><path d="M2968,290C2970,296 2982,333 2985,339C2988,345 2979,345 2992,343C3005,341 3080,324 3100,318C3120,312 3149,299 3160,295C3171,291 3191,288 3195,287" fill="none" stroke="#fff" stroke-width="5.5" stroke-linejoin="round" stroke-linecap="round" /><path d="M3096,318C3099,327 3108,388 3118,395C3128,402 3171,379 3180,380C3189,381 3192,398 3192,402C3192,406 3184,409 3183,410" fill="none" stroke="#fff" stroke-width="5.5" stroke-linejoin="round" stroke-linecap="round" /><path d="M3112,360C3117,359 3146,347 3152,350C3158,353 3163,381 3165,385" fill="none" stroke="#fff" stroke-width="5.5" stroke-linejoin="round" stroke-linecap="round" /><polyline points="3160,295 3172,333" fill="none" stroke="#fff" stroke-width="5.5" stroke-linejoin="round" stroke-linecap="round" /><polyline points="3192,268 3225,430" fill="none" stroke="#fff" stroke-width="5.5" stroke-linejoin="round" stroke-linecap="round" /><path d="M3192,268C3199,267 3243,256 3250,260C3257,264 3253,290 3255,300C3257,310 3265,339 3270,350C3275,361 3293,386 3300,395C3307,404 3325,420 3330,425C3335,430 3343,438 3345,440" fill="none" stroke="#fff" stroke-width="5.5" stroke-linejoin="round" stroke-linecap="round" /><polyline points="3225,415 3320,340" fill="none" stroke="#fff" stroke-width="5.5" stroke-linejoin="round" stroke-linecap="round" /><polyline points="3303,270 3330,362" fill="none" stroke="#fff" stroke-width="5.5" stroke-linejoin="round" stroke-linecap="round" /><path d="M3230,225C3234,227 3251,239 3260,242C3269,245 3300,253 3305,254" fill="none" stroke="#fff" stroke-width="5.5" stroke-linejoin="round" stroke-linecap="round" /><path d="M3347,355C3357,353 3414,340 3434,337C3454,334 3510,327 3520,326" fill="none" stroke="#fff" stroke-width="5.5" stroke-linejoin="round" stroke-linecap="round" /><path d="M3434,341C3438,360 3457,484 3467,500C3477,516 3511,483 3517,481" fill="none" stroke="#fff" stroke-width="5.5" stroke-linejoin="round" stroke-linecap="round" /><path d="M3313,412C3315,411 3311,410 3330,405C3349,400 3461,374 3480,372C3499,370 3489,368 3495,385C3501,402 3522,498 3530,520C3538,542 3561,566 3565,572" fill="none" stroke="#fff" stroke-width="5.5" stroke-linejoin="round" stroke-linecap="round" /><polyline points="3513,430 3680,365" fill="none" stroke="#fff" stroke-width="5.5" stroke-linejoin="round" stroke-linecap="round" /><path d="M3535,360C3543,356 3596,328 3605,326C3614,324 3610,333 3612,340C3614,347 3614,366 3620,385C3626,404 3656,478 3665,500C3674,522 3694,557 3700,570C3706,583 3718,605 3720,610" fill="none" stroke="#fff" stroke-width="5.5" stroke-linejoin="round" stroke-linecap="round" /><path d="M3540,375C3542,386 3551,457 3560,465C3569,473 3613,443 3620,440" fill="none" stroke="#fff" stroke-width="5.5" stroke-linejoin="round" stroke-linecap="round" /><polyline points="3565,572 3660,515" fill="none" stroke="#fff" stroke-width="5.5" stroke-linejoin="round" stroke-linecap="round" /><polyline points="3140,495 3320,480" fill="none" stroke="#fff" stroke-width="5.5" stroke-linejoin="round" stroke-linecap="round" /><path d="M3140,495C3144,512 3172,616 3175,640C3178,664 3171,693 3170,700" fill="none" stroke="#fff" stroke-width="5.5" stroke-linejoin="round" stroke-linecap="round" /><polyline points="3060,560 3100,545" fill="none" stroke="#fff" stroke-width="5.5" stroke-linejoin="round" stroke-linecap="round" /><polyline points="3085,548 3092,590" fill="none" stroke="#fff" stroke-width="5.5" stroke-linejoin="round" stroke-linecap="round" /><polyline points="3062,598 3116,587" fill="none" stroke="#fff" stroke-width="5.5" stroke-linejoin="round" stroke-linecap="round" /><path d="M2990,705C2994,696 3012,644 3020,630C3028,616 3054,591 3060,585C3066,579 3073,576 3075,575" fill="none" stroke="#fff" stroke-width="5.5" stroke-linejoin="round" stroke-linecap="round" /><path d="M3177,655C3180,654 3191,655 3200,650C3209,645 3239,614 3250,610C3261,606 3287,612 3292,612" fill="none" stroke="#fff" stroke-width="5.5" stroke-linejoin="round" stroke-linecap="round" /><path d="M3470,610C3475,610 3498,614 3510,612C3522,610 3552,601 3570,590C3588,579 3650,528 3660,520" fill="none" stroke="#fff" stroke-width="5.5" stroke-linejoin="round" stroke-linecap="round" /><path d="M2928,700C2929,687 2932,613 2935,590C2938,567 2942,518 2950,500C2958,482 2985,454 3000,440C3015,426 3072,389 3082,382" fill="none" stroke="#fff" stroke-width="5.5" stroke-linejoin="round" stroke-linecap="round" /><polyline points="2918,487 2935,535" fill="none" stroke="#fff" stroke-width="5.5" stroke-linejoin="round" stroke-linecap="round" /><polyline points="3680,244 3700,225" fill="none" stroke="#fff" stroke-width="5.5" stroke-linejoin="round" stroke-linecap="round" /><path d="M3760,221C3762,224 3771,241 3775,250C3779,259 3790,291 3795,300C3800,309 3813,326 3815,330" fill="none" stroke="#fff" stroke-width="5.5" stroke-linejoin="round" stroke-linecap="round" /><polyline points="3780,255 3800,221" fill="none" stroke="#fff" stroke-width="5.5" stroke-linejoin="round" stroke-linecap="round" /><path d="M3826,254C3824,252 3816,238 3812,235C3808,232 3793,226 3790,225" fill="none" stroke="#fff" stroke-width="5.5" stroke-linejoin="round" stroke-linecap="round" /><path d="M3770,270C3774,278 3791,317 3800,340C3809,363 3840,455 3845,470" fill="none" stroke="#fff" stroke-width="5.5" stroke-linejoin="round" stroke-linecap="round" /><polyline points="3826,365 3878,343" fill="none" stroke="#fff" stroke-width="5.5" stroke-linejoin="round" stroke-linecap="round" /><polyline points="3895,240 3920,221" fill="none" stroke="#fff" stroke-width="5.5" stroke-linejoin="round" stroke-linecap="round" /><path d="M4200,262C4205,259 4229,228 4242,236C4255,244 4305,319 4313,330" fill="none" stroke="#fff" stroke-width="5.5" stroke-linejoin="round" stroke-linecap="round" /><polyline points="4240,290 4270,380" fill="none" stroke="#fff" stroke-width="5.5" stroke-linejoin="round" stroke-linecap="round" /><polyline points="4215,365 4250,420" fill="none" stroke="#fff" stroke-width="5.5" stroke-linejoin="round" stroke-linecap="round" /><path d="M2171,889C2190,887 2302,879 2336,871C2370,863 2437,832 2461,821C2485,810 2520,786 2538,774C2556,762 2605,728 2616,720C2627,712 2633,709 2635,708" fill="none" stroke="#fff" stroke-width="5.5" stroke-linejoin="round" stroke-linecap="round" /><path d="M2228,708C2230,715 2239,757 2243,766C2247,775 2249,788 2263,788C2277,788 2343,775 2367,766C2391,757 2460,715 2472,708" fill="none" stroke="#fff" stroke-width="5.5" stroke-linejoin="round" stroke-linecap="round" /><polyline points="2319,708 2331,776" fill="none" stroke="#fff" stroke-width="5.5" stroke-linejoin="round" stroke-linecap="round" /><polyline points="2336,871 2383,1092" fill="none" stroke="#fff" stroke-width="5.5" stroke-linejoin="round" stroke-linecap="round" /><polyline points="2243,887 2270,995" fill="none" stroke="#fff" stroke-width="5.5" stroke-linejoin="round" stroke-linecap="round" /><polyline points="2171,1019 2360,984" fill="none" stroke="#fff" stroke-width="5.5" stroke-linejoin="round" stroke-linecap="round" /><polyline points="2373,1017 2612,962" fill="none" stroke="#fff" stroke-width="5.5" stroke-linejoin="round" stroke-linecap="round" /><path d="M2424,918C2430,917 2453,917 2472,912C2491,907 2562,885 2585,877C2608,869 2657,848 2666,844" fill="none" stroke="#fff" stroke-width="5.5" stroke-linejoin="round" stroke-linecap="round" /><polyline points="2585,877 2641,1030" fill="none" stroke="#fff" stroke-width="5.5" stroke-linejoin="round" stroke-linecap="round" /><polyline points="2608,1061 2622,1195" fill="none" stroke="#fff" stroke-width="5.5" stroke-linejoin="round" stroke-linecap="round" /><polyline points="2197,1135 2200,1230" fill="none" stroke="#fff" stroke-width="5.5" stroke-linejoin="round" stroke-linecap="round" /><polyline points="2437,1186 2620,1150" fill="none" stroke="#fff" stroke-width="5.5" stroke-linejoin="round" stroke-linecap="round" /><polyline points="2666,848 2709,937" fill="none" stroke="#fff" stroke-width="5.5" stroke-linejoin="round" stroke-linecap="round" /><polyline points="2701,949 2748,995" fill="none" stroke="#fff" stroke-width="5.5" stroke-linejoin="round" stroke-linecap="round" /><path d="M2930,793C2939,803 2994,864 3004,879C3014,894 3015,920 3016,925" fill="none" stroke="#fff" stroke-width="5.5" stroke-linejoin="round" stroke-linecap="round" /><path d="M2926,708C2931,710 2957,723 2965,724C2973,725 2989,720 2992,720" fill="none" stroke="#fff" stroke-width="5.5" stroke-linejoin="round" stroke-linecap="round" /><polyline points="3109,724 3150,809" fill="none" stroke="#fff" stroke-width="5.5" stroke-linejoin="round" stroke-linecap="round" /><polyline points="2550,708 2572,745" fill="none" stroke="#fff" stroke-width="5.5" stroke-linejoin="round" stroke-linecap="round" /><path d="M2560,780C2565,781 2591,791 2600,790C2609,789 2635,772 2640,770" fill="none" stroke="#fff" stroke-width="5.5" stroke-linejoin="round" stroke-linecap="round" /><path d="M2171,950C2173,948 2190,937 2192,930C2194,923 2190,895 2190,890" fill="none" stroke="#fff" stroke-width="5.5" stroke-linejoin="round" stroke-linecap="round" /><polyline points="2730,1040 2745,1065" fill="none" stroke="#fff" stroke-width="5.5" stroke-linejoin="round" stroke-linecap="round" /><polyline points="2740,1130 2760,1090" fill="none" stroke="#fff" stroke-width="5.5" stroke-linejoin="round" stroke-linecap="round" /><path d="M2740,1130C2746,1132 2780,1144 2790,1150C2800,1156 2825,1176 2830,1180" fill="none" stroke="#fff" stroke-width="5.5" stroke-linejoin="round" stroke-linecap="round" /><polyline points="2845,1120 2820,1170" fill="none" stroke="#fff" stroke-width="5.5" stroke-linejoin="round" stroke-linecap="round" /><path d="M3150,740C3156,756 3187,838 3200,880C3213,922 3253,1074 3260,1100" fill="none" stroke="#fff" stroke-width="5.5" stroke-linejoin="round" stroke-linecap="round" /><polyline points="3286,708 3286,912" fill="none" stroke="#fff" stroke-width="5.5" stroke-linejoin="round" stroke-linecap="round" /><polyline points="3150,800 3180,880" fill="none" stroke="#fff" stroke-width="5.5" stroke-linejoin="round" stroke-linecap="round" /><polyline points="3358,823 3548,823" fill="none" stroke="#fff" stroke-width="5.5" stroke-linejoin="round" stroke-linecap="round" /><path d="M3430,875C3435,873 3452,856 3470,858C3488,860 3565,887 3580,890C3595,893 3590,901 3600,880C3610,859 3662,730 3670,710" fill="none" stroke="#fff" stroke-width="5.5" stroke-linejoin="round" stroke-linecap="round" /><polyline points="3538,790 3614,821" fill="none" stroke="#fff" stroke-width="5.5" stroke-linejoin="round" stroke-linecap="round" /><polyline points="3604,708 3643,762" fill="none" stroke="#fff" stroke-width="5.5" stroke-linejoin="round" stroke-linecap="round" /><path d="M3700,708C3695,711 3667,727 3660,735C3653,743 3642,770 3640,775" fill="none" stroke="#fff" stroke-width="5.5" stroke-linejoin="round" stroke-linecap="round" /><path d="M3643,983C3643,980 3631,981 3640,960C3649,939 3708,820 3720,800C3732,780 3731,787 3740,790C3749,793 3789,820 3800,826C3811,832 3824,852 3835,838C3846,824 3888,723 3895,708" fill="none" stroke="#fff" stroke-width="5.5" stroke-linejoin="round" stroke-linecap="round" /><path d="M3764,742C3767,744 3785,763 3790,760C3795,757 3808,725 3810,720" fill="none" stroke="#fff" stroke-width="5.5" stroke-linejoin="round" stroke-linecap="round" /><polyline points="3800,826 3740,945" fill="none" stroke="#fff" stroke-width="5.5" stroke-linejoin="round" stroke-linecap="round" /><polyline points="3783,867 3820,880" fill="none" stroke="#fff" stroke-width="5.5" stroke-linejoin="round" stroke-linecap="round" /><path d="M3643,983C3651,983 3676,982 3713,986C3750,990 3927,1013 3961,1015C3995,1017 3996,1006 4004,1003C4012,1000 4025,990 4028,988" fill="none" stroke="#fff" stroke-width="5.5" stroke-linejoin="round" stroke-linecap="round" /><polyline points="3680,985 3672,1010" fill="none" stroke="#fff" stroke-width="5.5" stroke-linejoin="round" stroke-linecap="round" /><path d="M3590,990C3590,998 3591,1047 3592,1060C3593,1073 3599,1095 3600,1100" fill="none" stroke="#fff" stroke-width="5.5" stroke-linejoin="round" stroke-linecap="round" /><polyline points="3600,985 3590,1020" fill="none" stroke="#fff" stroke-width="5.5" stroke-linejoin="round" stroke-linecap="round" /><path d="M3950,760C3946,770 3927,831 3920,850C3913,869 3895,902 3890,920C3885,938 3877,990 3875,1000C3873,1010 3871,1009 3870,1010" fill="none" stroke="#fff" stroke-width="5.5" stroke-linejoin="round" stroke-linecap="round" /><path d="M3888,920C3893,923 3924,939 3930,945C3936,951 3936,972 3937,975" fill="none" stroke="#fff" stroke-width="5.5" stroke-linejoin="round" stroke-linecap="round" /><path d="M3965,1015C3964,1025 3963,1084 3960,1100C3957,1116 3942,1144 3940,1150" fill="none" stroke="#fff" stroke-width="5.5" stroke-linejoin="round" stroke-linecap="round" /><path d="M4054,866C4069,866 4167,874 4180,870C4193,866 4169,839 4168,835" fill="none" stroke="#fff" stroke-width="5.5" stroke-linejoin="round" stroke-linecap="round" /><polyline points="4085,863 4095,940" fill="none" stroke="#fff" stroke-width="5.5" stroke-linejoin="round" stroke-linecap="round" /><path d="M4210,890C4212,886 4218,853 4230,855C4242,857 4303,904 4313,910" fill="none" stroke="#fff" stroke-width="5.5" stroke-linejoin="round" stroke-linecap="round" /><polyline points="4139,1066 4180,1090" fill="none" stroke="#fff" stroke-width="5.5" stroke-linejoin="round" stroke-linecap="round" /><polyline points="4211,1053 4311,1096" fill="none" stroke="#fff" stroke-width="5.5" stroke-linejoin="round" stroke-linecap="round" /><polyline points="3345,1180 3395,1195" fill="none" stroke="#fff" stroke-width="5.5" stroke-linejoin="round" stroke-linecap="round" /><polyline points="3370,1170 3420,1185" fill="none" stroke="#fff" stroke-width="5.5" stroke-linejoin="round" stroke-linecap="round" /><polyline points="2171,1236 2200,1236" fill="none" stroke="#fff" stroke-width="5.5" stroke-linejoin="round" stroke-linecap="round" /><path d="M2171,1290C2174,1290 2190,1290 2200,1288C2210,1286 2248,1275 2260,1272C2272,1269 2291,1265 2300,1265C2309,1265 2331,1269 2335,1270" fill="none" stroke="#fff" stroke-width="5.5" stroke-linejoin="round" stroke-linecap="round" /><path d="M2330,1225C2331,1228 2333,1250 2335,1255C2337,1260 2347,1264 2350,1270C2353,1276 2356,1296 2360,1310C2364,1324 2374,1374 2380,1390C2386,1406 2402,1434 2410,1450C2418,1466 2440,1512 2445,1525C2450,1538 2455,1549 2455,1564C2455,1579 2448,1644 2447,1655" fill="none" stroke="#fff" stroke-width="5.5" stroke-linejoin="round" stroke-linecap="round" /><polyline points="2171,1352 2355,1308" fill="none" stroke="#fff" stroke-width="5.5" stroke-linejoin="round" stroke-linecap="round" /><polyline points="2276,1330 2276,1625" fill="none" stroke="#fff" stroke-width="5.5" stroke-linejoin="round" stroke-linecap="round" /><polyline points="2193,1340 2193,1640" fill="none" stroke="#fff" stroke-width="5.5" stroke-linejoin="round" stroke-linecap="round" /><polyline points="2205,1497 2270,1485" fill="none" stroke="#fff" stroke-width="5.5" stroke-linejoin="round" stroke-linecap="round" /><path d="M2157,1647C2170,1645 2251,1630 2270,1627C2289,1624 2309,1622 2320,1622C2331,1622 2348,1620 2365,1626C2382,1632 2452,1662 2470,1670C2488,1678 2513,1692 2519,1695" fill="none" stroke="#fff" stroke-width="5.5" stroke-linejoin="round" stroke-linecap="round" /><path d="M2365,1626C2366,1609 2370,1499 2372,1480C2374,1461 2380,1464 2385,1460C2390,1456 2412,1447 2415,1445" fill="none" stroke="#fff" stroke-width="5.5" stroke-linejoin="round" stroke-linecap="round" /><polyline points="2454,1265 2510,1452" fill="none" stroke="#fff" stroke-width="5.5" stroke-linejoin="round" stroke-linecap="round" /><path d="M2463,1278C2467,1275 2491,1259 2500,1255C2509,1251 2530,1247 2540,1245C2550,1243 2581,1241 2590,1238C2599,1235 2611,1225 2615,1220C2619,1215 2621,1198 2622,1195" fill="none" stroke="#fff" stroke-width="5.5" stroke-linejoin="round" stroke-linecap="round" /><path d="M2540,1250C2542,1256 2552,1291 2555,1300C2558,1309 2566,1322 2568,1325" fill="none" stroke="#fff" stroke-width="5.5" stroke-linejoin="round" stroke-linecap="round" /><polyline points="2464,1380 2492,1362" fill="none" stroke="#fff" stroke-width="5.5" stroke-linejoin="round" stroke-linecap="round" /><polyline points="2498,1454 2555,1420" fill="none" stroke="#fff" stroke-width="5.5" stroke-linejoin="round" stroke-linecap="round" /><path d="M2455,1560C2459,1559 2478,1558 2490,1555C2502,1552 2550,1534 2560,1530C2570,1526 2570,1517 2572,1517C2574,1517 2574,1510 2580,1530C2586,1550 2615,1662 2620,1690C2625,1718 2624,1757 2625,1766" fill="none" stroke="#fff" stroke-width="5.5" stroke-linejoin="round" stroke-linecap="round" /><path d="M2500,1556C2502,1562 2517,1598 2520,1610C2523,1622 2526,1651 2525,1660C2524,1669 2516,1686 2515,1690" fill="none" stroke="#fff" stroke-width="5.5" stroke-linejoin="round" stroke-linecap="round" /><path d="M2607,1620C2625,1613 2739,1570 2760,1562C2781,1554 2786,1553 2790,1552" fill="none" stroke="#fff" stroke-width="5.5" stroke-linejoin="round" stroke-linecap="round" /><path d="M2618,1425C2621,1429 2636,1457 2640,1462C2644,1467 2638,1465 2650,1465C2662,1465 2731,1461 2742,1460" fill="none" stroke="#fff" stroke-width="5.5" stroke-linejoin="round" stroke-linecap="round" /><polyline points="2658,1378 2735,1378" fill="none" stroke="#fff" stroke-width="5.5" stroke-linejoin="round" stroke-linecap="round" /><path d="M2700,1338C2701,1343 2703,1373 2705,1380C2707,1387 2714,1390 2715,1395C2716,1400 2716,1417 2716,1420" fill="none" stroke="#fff" stroke-width="5.5" stroke-linejoin="round" stroke-linecap="round" /><path d="M2772,1260C2772,1266 2776,1306 2773,1312C2770,1318 2748,1312 2745,1312" fill="none" stroke="#fff" stroke-width="5.5" stroke-linejoin="round" stroke-linecap="round" /><polyline points="2745,1355 2795,1355" fill="none" stroke="#fff" stroke-width="5.5" stroke-linejoin="round" stroke-linecap="round" /><path d="M2876,1245C2875,1250 2867,1275 2865,1290C2863,1305 2862,1361 2862,1370" fill="none" stroke="#fff" stroke-width="5.5" stroke-linejoin="round" stroke-linecap="round" /><polyline points="2935,1280 2930,1350" fill="none" stroke="#fff" stroke-width="5.5" stroke-linejoin="round" stroke-linecap="round" /><path d="M2866,1353C2873,1353 2916,1349 2930,1350C2944,1351 2981,1363 2990,1365C2999,1367 3002,1366 3005,1365C3008,1364 3011,1361 3012,1360" fill="none" stroke="#fff" stroke-width="5.5" stroke-linejoin="round" stroke-linecap="round" /><path d="M2784,1415C2792,1413 2841,1403 2850,1402C2859,1401 2857,1391 2860,1410C2863,1429 2876,1547 2878,1565" fill="none" stroke="#fff" stroke-width="5.5" stroke-linejoin="round" stroke-linecap="round" /><polyline points="2779,1518 2865,1500" fill="none" stroke="#fff" stroke-width="5.5" stroke-linejoin="round" stroke-linecap="round" /><path d="M2800,1592C2809,1589 2866,1573 2880,1568C2894,1563 2912,1551 2920,1545C2928,1539 2943,1532 2945,1520C2947,1508 2940,1451 2940,1440C2940,1429 2942,1425 2948,1425C2954,1425 2980,1436 2990,1440C3000,1444 3021,1452 3030,1455C3039,1458 3065,1461 3070,1462" fill="none" stroke="#fff" stroke-width="5.5" stroke-linejoin="round" stroke-linecap="round" /><polyline points="2945,1518 3025,1528" fill="none" stroke="#fff" stroke-width="5.5" stroke-linejoin="round" stroke-linecap="round" /><path d="M2805,1630C2808,1629 2822,1619 2830,1618C2838,1617 2864,1620 2870,1620C2876,1620 2879,1625 2885,1622C2891,1619 2916,1600 2920,1597" fill="none" stroke="#fff" stroke-width="5.5" stroke-linejoin="round" stroke-linecap="round" /><path d="M2745,1648C2746,1653 2755,1683 2755,1690C2755,1697 2754,1703 2745,1705C2736,1707 2689,1706 2680,1708C2671,1710 2667,1713 2665,1720C2663,1727 2662,1761 2662,1766" fill="none" stroke="#fff" stroke-width="5.5" stroke-linejoin="round" stroke-linecap="round" /><path d="M2519,1695C2524,1696 2548,1701 2560,1700C2572,1699 2613,1691 2620,1690" fill="none" stroke="#fff" stroke-width="5.5" stroke-linejoin="round" stroke-linecap="round" /><polyline points="2560,1700 2530,1745" fill="none" stroke="#fff" stroke-width="5.5" stroke-linejoin="round" stroke-linecap="round" /><path d="M3150,1320C3154,1318 3171,1304 3180,1300C3189,1296 3221,1290 3230,1290C3239,1290 3256,1299 3260,1300" fill="none" stroke="#fff" stroke-width="5.5" stroke-linejoin="round" stroke-linecap="round" /><path d="M3300,1360C3299,1361 3294,1369 3290,1372C3286,1375 3272,1383 3270,1385" fill="none" stroke="#fff" stroke-width="5.5" stroke-linejoin="round" stroke-linecap="round" /><path d="M3150,1540C3153,1536 3169,1510 3175,1505C3181,1500 3194,1497 3200,1498C3206,1499 3225,1507 3230,1510C3235,1513 3239,1519 3240,1525C3241,1531 3240,1551 3235,1560C3230,1569 3210,1592 3200,1600C3190,1608 3156,1626 3150,1630" fill="none" stroke="#fff" stroke-width="5.5" stroke-linejoin="round" stroke-linecap="round" /><path d="M3215,1485C3217,1480 3228,1454 3235,1445C3242,1436 3270,1414 3275,1410" fill="none" stroke="#fff" stroke-width="5.5" stroke-linejoin="round" stroke-linecap="round" /><path d="M3330,1455C3334,1454 3352,1446 3360,1445C3368,1444 3387,1446 3400,1450C3413,1454 3449,1469 3470,1480C3491,1491 3560,1533 3580,1545C3600,1557 3616,1573 3640,1585C3664,1597 3764,1634 3790,1645C3816,1656 3852,1676 3860,1680" fill="none" stroke="#fff" stroke-width="5.5" stroke-linejoin="round" stroke-linecap="round" /><path d="M3525,1615C3534,1612 3590,1598 3600,1592C3610,1586 3609,1568 3610,1565" fill="none" stroke="#fff" stroke-width="5.5" stroke-linejoin="round" stroke-linecap="round" /><path d="M3600,1592C3602,1594 3614,1587 3620,1605C3626,1623 3646,1729 3650,1745" fill="none" stroke="#fff" stroke-width="5.5" stroke-linejoin="round" stroke-linecap="round" /><polyline points="3620,1605 3640,1588" fill="none" stroke="#fff" stroke-width="5.5" stroke-linejoin="round" stroke-linecap="round" /><path d="M3248,1655C3253,1651 3284,1627 3290,1622C3296,1617 3297,1611 3300,1610C3303,1609 3313,1610 3315,1612C3317,1614 3319,1617 3318,1625C3317,1633 3309,1674 3308,1680" fill="none" stroke="#fff" stroke-width="5.5" stroke-linejoin="round" stroke-linecap="round" /><polyline points="3283,1628 3335,1766" fill="none" stroke="#fff" stroke-width="5.5" stroke-linejoin="round" stroke-linecap="round" /><polyline points="3330,1730 3530,1694" fill="none" stroke="#fff" stroke-width="5.5" stroke-linejoin="round" stroke-linecap="round" /><path d="M3650,1730C3656,1728 3691,1712 3700,1710C3709,1708 3724,1708 3730,1715C3736,1722 3748,1760 3750,1766" fill="none" stroke="#fff" stroke-width="5.5" stroke-linejoin="round" stroke-linecap="round" /><polyline points="3840,1445 3878,1447" fill="none" stroke="#fff" stroke-width="5.5" stroke-linejoin="round" stroke-linecap="round" /><path d="M3842,1445C3841,1453 3825,1505 3832,1515C3839,1525 3896,1536 3905,1530C3914,1524 3909,1470 3912,1460C3915,1450 3926,1444 3930,1440C3934,1436 3948,1427 3950,1425" fill="none" stroke="#fff" stroke-width="5.5" stroke-linejoin="round" stroke-linecap="round" /><path d="M3980,1290C3982,1291 3985,1293 3995,1295C4005,1297 4054,1308 4062,1310" fill="none" stroke="#fff" stroke-width="5.5" stroke-linejoin="round" stroke-linecap="round" /><path d="M3995,1295C3993,1300 3981,1328 3980,1340C3979,1352 3983,1386 3985,1395C3987,1404 3998,1413 4000,1415" fill="none" stroke="#fff" stroke-width="5.5" stroke-linejoin="round" stroke-linecap="round" /><path d="M3950,1425C3947,1422 3929,1408 3925,1400C3921,1392 3913,1373 3912,1360C3911,1347 3914,1305 3920,1290C3926,1275 3954,1239 3960,1230C3966,1221 3973,1217 3975,1215" fill="none" stroke="#fff" stroke-width="5.5" stroke-linejoin="round" stroke-linecap="round" /><path d="M3950,1425C3954,1427 3971,1441 3985,1445C3999,1449 4058,1460 4068,1462" fill="none" stroke="#fff" stroke-width="5.5" stroke-linejoin="round" stroke-linecap="round" /><polyline points="3985,1445 3975,1540" fill="none" stroke="#fff" stroke-width="5.5" stroke-linejoin="round" stroke-linecap="round" /><polyline points="3972,1555 4085,1575" fill="none" stroke="#fff" stroke-width="5.5" stroke-linejoin="round" stroke-linecap="round" /><polyline points="4064,1565 4072,1510" fill="none" stroke="#fff" stroke-width="5.5" stroke-linejoin="round" stroke-linecap="round" /><path d="M4150,1320C4148,1323 4136,1336 4135,1345C4134,1354 4139,1394 4140,1400" fill="none" stroke="#fff" stroke-width="5.5" stroke-linejoin="round" stroke-linecap="round" /><polyline points="4150,1405 4235,1420" fill="none" stroke="#fff" stroke-width="5.5" stroke-linejoin="round" stroke-linecap="round" /><polyline points="4175,1320 4255,1338" fill="none" stroke="#fff" stroke-width="5.5" stroke-linejoin="round" stroke-linecap="round" /><polyline points="4225,1325 4215,1412" fill="none" stroke="#fff" stroke-width="5.5" stroke-linejoin="round" stroke-linecap="round" /><polyline points="4195,1240 4220,1200" fill="none" stroke="#fff" stroke-width="5.5" stroke-linejoin="round" stroke-linecap="round" /><path d="M4250,1195C4254,1201 4280,1236 4285,1245C4290,1254 4287,1266 4290,1270C4293,1274 4310,1281 4313,1282" fill="none" stroke="#fff" stroke-width="5.5" stroke-linejoin="round" stroke-linecap="round" /><polyline points="4285,1245 4313,1215" fill="none" stroke="#fff" stroke-width="5.5" stroke-linejoin="round" stroke-linecap="round" /><polyline points="4135,1690 4313,1700" fill="none" stroke="#fff" stroke-width="5.5" stroke-linejoin="round" stroke-linecap="round" /><polyline points="4128,1645 4180,1640" fill="none" stroke="#fff" stroke-width="5.5" stroke-linejoin="round" stroke-linecap="round" /><path d="M902,1419C901,1426 886,1472 897,1481C908,1490 986,1500 999,1493C1012,1486 1004,1428 1005,1419" fill="none" stroke="#fff" stroke-width="5.5" stroke-linejoin="round" stroke-linecap="round" /><path d="M830,1499C832,1500 847,1493 848,1505C849,1517 827,1589 835,1603C843,1617 910,1624 920,1627" fill="none" stroke="#fff" stroke-width="5.5" stroke-linejoin="round" stroke-linecap="round" /><path d="M1069,1494C1064,1494 1038,1490 1030,1491C1022,1492 1002,1500 997,1503C992,1506 992,1500 988,1520C984,1540 963,1654 960,1672" fill="none" stroke="#fff" stroke-width="5.5" stroke-linejoin="round" stroke-linecap="round" /><path d="M958,1685C957,1688 950,1703 948,1712C946,1721 944,1760 944,1766" fill="none" stroke="#fff" stroke-width="5.5" stroke-linejoin="round" stroke-linecap="round" /><polyline points="884,1696 950,1708" fill="none" stroke="#fff" stroke-width="5.5" stroke-linejoin="round" stroke-linecap="round" /><polyline points="884,1696 872,1766" fill="none" stroke="#fff" stroke-width="5.5" stroke-linejoin="round" stroke-linecap="round" /><path d="M1084,1419C1082,1427 1071,1461 1066,1490C1061,1519 1044,1640 1039,1666C1034,1692 1027,1705 1024,1717C1021,1729 1016,1760 1015,1766" fill="none" stroke="#fff" stroke-width="5.5" stroke-linejoin="round" stroke-linecap="round" /><path d="M1157,1419C1155,1432 1143,1499 1138,1528C1133,1557 1115,1653 1112,1669" fill="none" stroke="#fff" stroke-width="5.5" stroke-linejoin="round" stroke-linecap="round" /><path d="M1039,1666C1056,1667 1158,1674 1183,1676C1208,1678 1246,1681 1254,1682" fill="none" stroke="#fff" stroke-width="5.5" stroke-linejoin="round" stroke-linecap="round" /><path d="M1220,1458C1218,1469 1206,1530 1201,1555C1196,1580 1183,1662 1181,1676" fill="none" stroke="#fff" stroke-width="5.5" stroke-linejoin="round" stroke-linecap="round" /><polyline points="1150,1545 1201,1555" fill="none" stroke="#fff" stroke-width="5.5" stroke-linejoin="round" stroke-linecap="round" /><polyline points="1198,1603 1286,1620" fill="none" stroke="#fff" stroke-width="5.5" stroke-linejoin="round" stroke-linecap="round" /><path d="M1174,1419C1179,1423 1207,1445 1219,1457C1231,1469 1269,1500 1274,1518C1279,1536 1262,1598 1260,1609" fill="none" stroke="#fff" stroke-width="5.5" stroke-linejoin="round" stroke-linecap="round" /><path d="M1274,1518C1279,1512 1313,1476 1314,1464C1315,1452 1288,1424 1284,1419" fill="none" stroke="#fff" stroke-width="5.5" stroke-linejoin="round" stroke-linecap="round" /><path d="M1402,1490C1396,1500 1361,1559 1353,1576C1345,1593 1335,1625 1332,1639C1329,1653 1328,1684 1326,1699C1324,1714 1313,1758 1311,1766" fill="none" stroke="#fff" stroke-width="5.5" stroke-linejoin="round" stroke-linecap="round" /><polyline points="1272,1669 1326,1696" fill="none" stroke="#fff" stroke-width="5.5" stroke-linejoin="round" stroke-linecap="round" /><path d="M1450,1554C1444,1566 1404,1634 1398,1654C1392,1674 1395,1720 1395,1729" fill="none" stroke="#fff" stroke-width="5.5" stroke-linejoin="round" stroke-linecap="round" /><path d="M1508,1594C1503,1603 1470,1649 1465,1669C1460,1689 1465,1755 1465,1766" fill="none" stroke="#fff" stroke-width="5.5" stroke-linejoin="round" stroke-linecap="round" /><polyline points="1398,1688 1465,1688" fill="none" stroke="#fff" stroke-width="5.5" stroke-linejoin="round" stroke-linecap="round" /><path d="M1552,1651C1550,1655 1539,1671 1537,1684C1535,1697 1535,1756 1535,1766" fill="none" stroke="#fff" stroke-width="5.5" stroke-linejoin="round" stroke-linecap="round" /><path d="M1526,1419C1535,1427 1586,1475 1600,1487C1614,1499 1641,1519 1650,1523C1659,1527 1664,1532 1679,1520C1694,1508 1766,1431 1778,1419" fill="none" stroke="#fff" stroke-width="5.5" stroke-linejoin="round" stroke-linecap="round" /><polyline points="1663,1525 1666,1564" fill="none" stroke="#fff" stroke-width="5.5" stroke-linejoin="round" stroke-linecap="round" /><path d="M1871,1463C1853,1481 1736,1598 1715,1621C1694,1644 1696,1653 1694,1657" fill="none" stroke="#fff" stroke-width="5.5" stroke-linejoin="round" stroke-linecap="round" /><path d="M1845,1490C1849,1494 1866,1519 1877,1523C1888,1527 1932,1525 1939,1525" fill="none" stroke="#fff" stroke-width="5.5" stroke-linejoin="round" stroke-linecap="round" /><polyline points="1868,1518 1802,1585" fill="none" stroke="#fff" stroke-width="5.5" stroke-linejoin="round" stroke-linecap="round" /><polyline points="1889,1525 1884,1550" fill="none" stroke="#fff" stroke-width="5.5" stroke-linejoin="round" stroke-linecap="round" /><path d="M1889,1419C1892,1424 1913,1451 1918,1460C1923,1469 1933,1482 1936,1496C1939,1510 1940,1555 1941,1579C1942,1603 1945,1688 1945,1702" fill="none" stroke="#fff" stroke-width="5.5" stroke-linejoin="round" stroke-linecap="round" /><path d="M1863,1582C1865,1583 1878,1590 1880,1594C1882,1598 1884,1611 1884,1615C1884,1619 1882,1624 1880,1627C1878,1630 1866,1640 1865,1644C1864,1648 1866,1659 1868,1663C1870,1667 1881,1677 1886,1680C1891,1683 1909,1686 1912,1687" fill="none" stroke="#fff" stroke-width="5.5" stroke-linejoin="round" stroke-linecap="round" /><polyline points="1881,1624 1939,1624" fill="none" stroke="#fff" stroke-width="5.5" stroke-linejoin="round" stroke-linecap="round" /><path d="M1552,1653C1550,1657 1538,1674 1536,1687C1534,1700 1535,1757 1535,1766" fill="none" stroke="#fff" stroke-width="5.5" stroke-linejoin="round" stroke-linecap="round" /><polyline points="1608,1696 1605,1766" fill="none" stroke="#fff" stroke-width="5.5" stroke-linejoin="round" stroke-linecap="round" /><path d="M1500,1535C1509,1542 1563,1586 1575,1594C1587,1602 1596,1599 1599,1600" fill="none" stroke="#fff" stroke-width="5.5" stroke-linejoin="round" stroke-linecap="round" /><path d="M2147,1766C2147,1753 2145,1665 2146,1651C2147,1637 2157,1647 2158,1647" fill="none" stroke="#fff" stroke-width="5.5" stroke-linejoin="round" stroke-linecap="round" /><path d="M2720,500C2715,510 2699,537 2690,560C2681,583 2672,615 2668,640C2664,665 2664,684 2666,708C2668,732 2670,760 2682,786C2694,812 2719,831 2740,863C2761,895 2798,960 2810,980" fill="none" stroke="#fff" stroke-width="20" stroke-linejoin="round" stroke-linecap="round" /><path d="M2740,863C2752,882 2790,946 2810,980C2830,1014 2840,1029 2857,1065C2874,1101 2890,1158 2911,1195C2932,1232 2960,1256 2985,1286C3010,1316 3043,1355 3062,1378C3081,1401 3094,1417 3101,1425" fill="none" stroke="#fff" stroke-width="15" stroke-linejoin="round" stroke-linecap="round" /><path d="M3101,1436C3098,1448 3098,1482 3082,1506C3066,1530 3022,1563 3004,1583C2986,1603 2996,1594 2974,1625C2952,1656 2887,1742 2870,1766" fill="none" stroke="#fff" stroke-width="16" stroke-linejoin="round" stroke-linecap="round" /><circle cx="3126" cy="1438" r="24" fill="#fff"/><circle cx="3126" cy="1438" r="9" fill="#e9e6e1"/><path d="M3126,1420C3132,1413 3146,1386 3160,1380C3174,1374 3200,1381 3208,1381" fill="none" stroke="#fff" stroke-width="14" stroke-linejoin="round" stroke-linecap="round" /><path d="M2946,956C2963,951 3016,933 3050,925C3084,917 3098,908 3150,906C3202,904 3320,911 3360,916C3400,921 3386,931 3391,934" fill="none" stroke="#fff" stroke-width="13" stroke-linejoin="round" stroke-linecap="round" /><path d="M3391,937C3400,935 3414,918 3445,924C3476,930 3536,956 3577,972C3618,988 3649,994 3694,1019C3739,1044 3804,1091 3849,1120C3894,1149 3930,1176 3965,1195C4000,1214 4027,1222 4060,1235C4093,1248 4133,1261 4161,1274C4189,1287 4201,1300 4226,1311C4251,1322 4298,1333 4313,1337" fill="none" stroke="#fff" stroke-width="15" stroke-linejoin="round" stroke-linecap="round" /><path d="M3391,937C3382,944 3350,957 3336,980C3322,1003 3311,1041 3305,1077C3299,1113 3299,1162 3298,1195C3297,1228 3304,1252 3301,1273C3298,1294 3294,1305 3278,1323C3262,1341 3229,1364 3208,1381C3187,1398 3160,1420 3150,1428" fill="none" stroke="#fff" stroke-width="15" stroke-linejoin="round" stroke-linecap="round" /><polyline points="3558,708 3472,924" fill="none" stroke="#fff" stroke-width="10" stroke-linejoin="round" stroke-linecap="round" /><path d="M3610,600C3604,610 3584,642 3575,660C3566,678 3561,700 3558,708" fill="none" stroke="#fff" stroke-width="8" stroke-linejoin="round" stroke-linecap="round" /><path d="M3935,766C3943,789 3970,854 3985,902C4000,950 4015,1020 4027,1057C4039,1094 4048,1104 4055,1127C4062,1150 4066,1145 4072,1195C4078,1245 4085,1354 4091,1428C4097,1502 4103,1582 4110,1638C4117,1694 4129,1745 4133,1766" fill="none" stroke="#fff" stroke-width="12" stroke-linejoin="round" stroke-linecap="round" /><path d="M4028,988C4040,983 4068,964 4102,960C4136,956 4209,963 4230,964" fill="none" stroke="#fff" stroke-width="14" stroke-linejoin="round" stroke-linecap="round" /><path d="M1416,1419C1418,1426 1420,1445 1428,1460C1436,1475 1444,1488 1464,1508C1484,1528 1521,1552 1547,1579C1573,1606 1604,1650 1620,1669C1636,1688 1638,1688 1644,1696C1650,1704 1653,1704 1658,1716C1663,1728 1670,1758 1672,1766" fill="none" stroke="#fff" stroke-width="14" stroke-linejoin="round" stroke-linecap="round" /><polyline points="3494,1200 3700,1268" fill="none" stroke="#fff" stroke-width="6" stroke-linejoin="round" stroke-linecap="round" /><circle cx="4128" cy="1059" r="12.5" fill="none" stroke="#fff" stroke-width="5"/><path d="M1904,221C1913,224 1942,234 1960,240C1978,246 1955,238 2012,256C2069,274 2191,310 2300,345C2409,380 2596,439 2668,464C2740,489 2720,488 2731,493" fill="none" stroke="#fbfaf8" stroke-width="20" stroke-linejoin="round" stroke-linecap="round" /><path d="M2012,256C2010,263 2010,283 2001,299C1992,315 1974,338 1958,353C1942,368 1917,381 1904,389C1891,397 1884,398 1880,400" fill="none" stroke="#fbfaf8" stroke-width="20" stroke-linejoin="round" stroke-linecap="round" /><path d="M1997,341C1995,344 1989,355 1985,360C1981,365 1972,370 1975,372C1978,374 1996,379 2001,374C2006,369 2003,346 2003,340" fill="none" stroke="#fbfaf8" stroke-width="20" stroke-linejoin="round" stroke-linecap="round" /><path d="M830,461C838,465 856,472 876,484C896,496 938,522 950,530" fill="none" stroke="#fbfaf8" stroke-width="20" stroke-linejoin="round" stroke-linecap="round" /><path d="M2731,493C2748,503 2777,519 2830,551C2883,583 2998,658 3047,683C3096,708 3086,703 3121,702C3156,701 3221,681 3257,677C3293,673 3286,675 3335,679C3384,683 3505,699 3548,700C3591,701 3555,706 3591,683C3627,660 3727,583 3762,559C3797,535 3784,539 3800,538C3816,537 3807,557 3855,551C3903,545 4033,517 4088,504C4143,491 4148,492 4185,473C4222,454 4292,402 4313,388" fill="none" stroke="#fbfaf8" stroke-width="20" stroke-linejoin="round" stroke-linecap="round" /><path d="M1904,221C1913,224 1942,234 1960,240C1978,246 1955,238 2012,256C2069,274 2191,310 2300,345C2409,380 2596,439 2668,464C2740,489 2720,488 2731,493" fill="none" stroke="#f6c98f" stroke-width="15" stroke-linejoin="round" stroke-linecap="round" /><path d="M2012,256C2010,263 2010,283 2001,299C1992,315 1974,338 1958,353C1942,368 1917,381 1904,389C1891,397 1884,398 1880,400" fill="none" stroke="#f6c98f" stroke-width="15" stroke-linejoin="round" stroke-linecap="round" /><path d="M1997,341C1995,344 1989,355 1985,360C1981,365 1972,370 1975,372C1978,374 1996,379 2001,374C2006,369 2003,346 2003,340" fill="none" stroke="#f6c98f" stroke-width="15" stroke-linejoin="round" stroke-linecap="round" /><path d="M830,461C838,465 856,472 876,484C896,496 938,522 950,530" fill="none" stroke="#f6c98f" stroke-width="15" stroke-linejoin="round" stroke-linecap="round" /><path d="M2731,493C2748,503 2777,519 2830,551C2883,583 2998,658 3047,683C3096,708 3086,703 3121,702C3156,701 3221,681 3257,677C3293,673 3286,675 3335,679C3384,683 3505,699 3548,700C3591,701 3555,706 3591,683C3627,660 3727,583 3762,559C3797,535 3784,539 3800,538C3816,537 3807,557 3855,551C3903,545 4033,517 4088,504C4143,491 4148,492 4185,473C4222,454 4292,402 4313,388" fill="none" stroke="#f6c98f" stroke-width="15" stroke-linejoin="round" stroke-linecap="round" /><path id="tp1" d="M1300,300C1317,305 1368,322 1400,331C1432,340 1462,349 1490,357C1518,365 1554,376 1567,379" fill="none"/><text font-size="29.5" fill="#f0ede9" stroke="#f0ede9" stroke-width="6" stroke-linejoin="round"><textPath href="#tp1" textLength="193" lengthAdjust="spacing">Nugent Road</textPath></text><text font-size="29.5" fill="#5a5a5a" stroke="#5a5a5a" stroke-width="0.7"><textPath href="#tp1" textLength="193" lengthAdjust="spacing">Nugent Road</textPath></text><g transform="translate(1680,392) rotate(-79.5)"><text x="0" y="0" font-size="29.5" textLength="137.0" lengthAdjust="spacing" fill="#f0ede9" stroke="#f0ede9" stroke-width="6" stroke-linejoin="round">wn Road</text><text x="0" y="0" font-size="29.5" textLength="137.0" lengthAdjust="spacing" fill="#5a5a5a" stroke="#5a5a5a" stroke-width="0.7">wn Road</text></g><path id="tp2" d="M2120,297C2150,306 2237,332 2300,352C2363,372 2454,400 2500,414C2546,428 2564,434 2576,438" fill="none"/><text font-size="31" font-weight="700" fill="#f0ede9" stroke="#f0ede9" stroke-width="6" stroke-linejoin="round"><textPath href="#tp2" textLength="392" lengthAdjust="spacing">Churchtown Road Upper</textPath></text><text font-size="31" font-weight="700" fill="#5a5a5a" stroke="#5a5a5a" stroke-width="0.7"><textPath href="#tp2" textLength="392" lengthAdjust="spacing">Churchtown Road Upper</textPath></text><path id="tp3" d="M2170,512C2174,525 2185,563 2194,590C2203,617 2213,646 2222,672C2231,698 2244,735 2248,748" fill="none"/><text font-size="29.5" fill="#f0ede9" stroke="#f0ede9" stroke-width="6" stroke-linejoin="round"><textPath href="#tp3" textLength="163" lengthAdjust="spacing">ston Park</textPath></text><text font-size="29.5" fill="#5a5a5a" stroke="#5a5a5a" stroke-width="0.7"><textPath href="#tp3" textLength="163" lengthAdjust="spacing">ston Park</textPath></text><g transform="translate(2748,226) rotate(90)"><text x="0" y="0" font-size="29.5" textLength="92.0" lengthAdjust="spacing" fill="#f0ede9" stroke="#f0ede9" stroke-width="6" stroke-linejoin="round">n Roa</text><text x="0" y="0" font-size="29.5" textLength="92.0" lengthAdjust="spacing" fill="#5a5a5a" stroke="#5a5a5a" stroke-width="0.7">n Roa</text></g><path id="tp4" d="M3327,447C3330,462 3334,515 3342,540C3350,565 3351,584 3372,597C3393,610 3439,611 3468,617C3497,623 3533,631 3546,633" fill="none"/><text font-size="29.5" fill="#f0ede9" stroke="#f0ede9" stroke-width="6" stroke-linejoin="round"><textPath href="#tp4" textLength="245" lengthAdjust="spacing">Taney Crescent</textPath></text><text font-size="29.5" fill="#5a5a5a" stroke="#5a5a5a" stroke-width="0.7"><textPath href="#tp4" textLength="245" lengthAdjust="spacing">Taney Crescent</textPath></text><g transform="translate(3599,673) rotate(-37)"><text x="0" y="0" font-size="31" font-weight="700" textLength="188.0" lengthAdjust="spacing" fill="#f0ede9" stroke="#f0ede9" stroke-width="6" stroke-linejoin="round">Taney Road</text><text x="0" y="0" font-size="31" font-weight="700" textLength="188.0" lengthAdjust="spacing" fill="#5a5a5a" stroke="#5a5a5a" stroke-width="0.7">Taney Road</text></g><text x="3610.0" y="391.8" font-size="37" fill="#141414" font-weight="700" textLength="210.0" lengthAdjust="spacingAndGlyphs" paint-order="stroke" stroke="#f0ede9" stroke-width="4">Goatstown</text><text x="3833.0" y="1393.0" font-size="40" fill="#141414" font-weight="700" textLength="181.0" lengthAdjust="spacingAndGlyphs" paint-order="stroke" stroke="#f0ede9" stroke-width="4">Kilmacud</text><path id="tp5" d="M2236,886C2253,883 2306,878 2340,868C2374,858 2408,841 2440,825C2472,809 2504,786 2530,770C2556,754 2587,735 2598,728" fill="none"/><text font-size="31" fill="#f0ede9" stroke="#f0ede9" stroke-width="6" stroke-linejoin="round"><textPath href="#tp5" textLength="318" lengthAdjust="spacing">Sweetmount Avenue</textPath></text><text font-size="31" fill="#5a5a5a" stroke="#5a5a5a" stroke-width="0.7"><textPath href="#tp5" textLength="318" lengthAdjust="spacing">Sweetmount Avenue</textPath></text><g transform="translate(2406,1016) rotate(-13)"><text x="0" y="0" font-size="29.5" textLength="188.0" lengthAdjust="spacing" fill="#f0ede9" stroke="#f0ede9" stroke-width="6" stroke-linejoin="round">Laurel Drive</text><text x="0" y="0" font-size="29.5" textLength="188.0" lengthAdjust="spacing" fill="#5a5a5a" stroke="#5a5a5a" stroke-width="0.7">Laurel Drive</text></g><g transform="translate(2175,1029) rotate(-11)"><text x="0" y="0" font-size="29.5" textLength="127.0" lengthAdjust="spacing" fill="#f0ede9" stroke="#f0ede9" stroke-width="6" stroke-linejoin="round">rel Road</text><text x="0" y="0" font-size="29.5" textLength="127.0" lengthAdjust="spacing" fill="#5a5a5a" stroke="#5a5a5a" stroke-width="0.7">rel Road</text></g><g transform="translate(2172,1127) rotate(-6)"><text x="0" y="0" font-size="29.5" textLength="137.0" lengthAdjust="spacing" fill="#f0ede9" stroke="#f0ede9" stroke-width="6" stroke-linejoin="round">oad East</text><text x="0" y="0" font-size="29.5" textLength="137.0" lengthAdjust="spacing" fill="#5a5a5a" stroke="#5a5a5a" stroke-width="0.7">oad East</text></g><g transform="translate(2213,1239) rotate(-13.3)"><text x="0" y="0" font-size="29.5" textLength="234.0" lengthAdjust="spacing" fill="#f0ede9" stroke="#f0ede9" stroke-width="6" stroke-linejoin="round">Meadow Grove</text><text x="0" y="0" font-size="29.5" textLength="234.0" lengthAdjust="spacing" fill="#5a5a5a" stroke="#5a5a5a" stroke-width="0.7">Meadow Grove</text></g><g transform="translate(2172,1359) rotate(-8)"><text x="0" y="0" font-size="29.5" textLength="42.0" lengthAdjust="spacing" fill="#f0ede9" stroke="#f0ede9" stroke-width="6" stroke-linejoin="round">wn</text><text x="0" y="0" font-size="29.5" textLength="42.0" lengthAdjust="spacing" fill="#5a5a5a" stroke="#5a5a5a" stroke-width="0.7">wn</text></g><g transform="translate(2203,1588) rotate(-90)"><text x="0" y="0" font-size="29.5" textLength="190.0" lengthAdjust="spacing" fill="#f0ede9" stroke="#f0ede9" stroke-width="6" stroke-linejoin="round">Beech Drive</text><text x="0" y="0" font-size="29.5" textLength="190.0" lengthAdjust="spacing" fill="#5a5a5a" stroke="#5a5a5a" stroke-width="0.7">Beech Drive</text></g><g transform="translate(2285,1602) rotate(-90)"><text x="0" y="0" font-size="29.5" textLength="245.0" lengthAdjust="spacing" fill="#f0ede9" stroke="#f0ede9" stroke-width="6" stroke-linejoin="round">Sycamore Road</text><text x="0" y="0" font-size="29.5" textLength="245.0" lengthAdjust="spacing" fill="#5a5a5a" stroke="#5a5a5a" stroke-width="0.7">Sycamore Road</text></g><g transform="translate(2364,1346) rotate(68)"><text x="0" y="0" font-size="29.5" textLength="200.0" lengthAdjust="spacing" fill="#f0ede9" stroke="#f0ede9" stroke-width="6" stroke-linejoin="round">Willow Road</text><text x="0" y="0" font-size="29.5" textLength="200.0" lengthAdjust="spacing" fill="#5a5a5a" stroke="#5a5a5a" stroke-width="0.7">Willow Road</text></g><path id="tp6" d="M2696,1137C2698,1156 2706,1211 2711,1250C2716,1289 2724,1339 2729,1373C2734,1407 2739,1439 2741,1452" fill="none"/><text font-size="29.5" fill="#f0ede9" stroke="#f0ede9" stroke-width="6" stroke-linejoin="round"><textPath href="#tp6" textLength="236" lengthAdjust="spacing">Ballinteer Road</textPath></text><text font-size="29.5" fill="#5a5a5a" stroke="#5a5a5a" stroke-width="0.7"><textPath href="#tp6" textLength="236" lengthAdjust="spacing">Ballinteer Road</textPath></text><g transform="translate(1060,1598) rotate(-80)"><text x="0" y="0" font-size="30" textLength="178.0" lengthAdjust="spacing" fill="#f0ede9" stroke="#f0ede9" stroke-width="6" stroke-linejoin="round">Marley Ave</text><text x="0" y="0" font-size="30" textLength="178.0" lengthAdjust="spacing" fill="#5a5a5a" stroke="#5a5a5a" stroke-width="0.7">Marley Ave</text></g><g transform="translate(1129,1638) rotate(-80)"><text x="0" y="0" font-size="30" textLength="196.0" lengthAdjust="spacing" fill="#f0ede9" stroke="#f0ede9" stroke-width="6" stroke-linejoin="round">Marley Walk</text><text x="0" y="0" font-size="30" textLength="196.0" lengthAdjust="spacing" fill="#5a5a5a" stroke="#5a5a5a" stroke-width="0.7">Marley Walk</text></g><path id="tp7" d="M1411,1466C1419,1477 1437,1509 1458,1532C1479,1555 1514,1581 1536,1603C1558,1625 1571,1644 1588,1664C1605,1684 1631,1715 1640,1725" fill="none"/><text font-size="30.5" fill="#f0ede9" stroke="#f0ede9" stroke-width="6" stroke-linejoin="round"><textPath href="#tp7" textLength="292" lengthAdjust="spacing">Stonemason's Way</textPath></text><text font-size="30.5" fill="#5a5a5a" stroke="#5a5a5a" stroke-width="0.7"><textPath href="#tp7" textLength="292" lengthAdjust="spacing">Stonemason's Way</textPath></text><path id="tp8" d="M3458,899C3465,882 3487,829 3502,800C3517,771 3535,749 3550,725C3565,701 3586,669 3593,658" fill="none"/><text font-size="30.5" fill="#f0ede9" stroke="#f0ede9" stroke-width="6" stroke-linejoin="round"><textPath href="#tp8" textLength="190" lengthAdjust="spacing">Birch's Lane</textPath></text><text font-size="30.5" fill="#5a5a5a" stroke="#5a5a5a" stroke-width="0.7"><textPath href="#tp8" textLength="190" lengthAdjust="spacing">Birch's Lane</textPath></text><path id="tp9" d="M3714,1000C3736,1003 3807,1010 3848,1016C3889,1022 3927,1030 3958,1036C3989,1042 4024,1048 4037,1050" fill="none"/><text font-size="30.5" fill="#f0ede9" stroke="#f0ede9" stroke-width="6" stroke-linejoin="round"><textPath href="#tp9" textLength="245" lengthAdjust="spacing">Eden Park Road</textPath></text><text font-size="30.5" fill="#5a5a5a" stroke="#5a5a5a" stroke-width="0.7"><textPath href="#tp9" textLength="245" lengthAdjust="spacing">Eden Park Road</textPath></text><path id="tp10" d="M3927,775C3934,796 3957,856 3972,900C3987,944 4002,1002 4015,1040C4028,1078 4037,1102 4047,1130C4057,1158 4069,1193 4074,1205" fill="none"/><text font-size="30" fill="#f0ede9" stroke="#f0ede9" stroke-width="6" stroke-linejoin="round"><textPath href="#tp10" textLength="372" lengthAdjust="spacing">Lower Drummartin Road</textPath></text><text font-size="30" fill="#4c4c4c" stroke="#4c4c4c" stroke-width="0.7"><textPath href="#tp10" textLength="372" lengthAdjust="spacing">Lower Drummartin Road</textPath></text><path id="tp11" d="M3830,1136C3851,1149 3920,1192 3958,1212C3996,1232 4026,1242 4058,1254C4090,1266 4120,1273 4148,1282C4176,1291 4212,1302 4224,1306" fill="none"/><text font-size="30.5" fill="#f0ede9" stroke="#f0ede9" stroke-width="6" stroke-linejoin="round"><textPath href="#tp11" textLength="345" lengthAdjust="spacing">Kilmacud Road Upper</textPath></text><text font-size="30.5" fill="#5a5a5a" stroke="#5a5a5a" stroke-width="0.7"><textPath href="#tp11" textLength="345" lengthAdjust="spacing">Kilmacud Road Upper</textPath></text><g transform="translate(4220,1204) rotate(-52)"><text x="0" y="0" font-size="30.5" textLength="172.0" lengthAdjust="spacing" fill="#f0ede9" stroke="#f0ede9" stroke-width="6" stroke-linejoin="round">Woodley P</text><text x="0" y="0" font-size="30.5" textLength="172.0" lengthAdjust="spacing" fill="#5a5a5a" stroke="#5a5a5a" stroke-width="0.7">Woodley P</text></g><path id="tp12" d="M3757,1648C3769,1654 3802,1670 3830,1681C3858,1692 3897,1706 3925,1717C3953,1728 3987,1741 4000,1745" fill="none"/><text font-size="30.5" fill="#f0ede9" stroke="#f0ede9" stroke-width="6" stroke-linejoin="round"><textPath href="#tp12" textLength="185" lengthAdjust="spacing">Balally Drive</textPath></text><text font-size="30.5" fill="#5a5a5a" stroke="#5a5a5a" stroke-width="0.7"><textPath href="#tp12" textLength="185" lengthAdjust="spacing">Balally Drive</textPath></text><g transform="translate(3730,1716) rotate(22)"><text x="0" y="0" font-size="31" textLength="130.0" lengthAdjust="spacing" fill="#c9c7c3" stroke="#c9c7c3" stroke-width="0.7">Balally A</text></g><g transform="translate(3548,1760) rotate(-60)"><text x="0" y="0" font-size="31" fill="#c9c7c3" stroke="#c9c7c3" stroke-width="0.7">B</text></g><text x="3011.8" y="1204.7" font-size="34" fill="#a0675d" font-weight="700" text-anchor="middle" textLength="124.0" lengthAdjust="spacingAndGlyphs">Dundrum</text><text x="3011.8" y="1237.7" font-size="34" fill="#a0675d" font-weight="700" text-anchor="middle" textLength="166.0" lengthAdjust="spacingAndGlyphs">Town Centre</text><text x="3233.5" y="1298.0" font-size="31" fill="#7a4c32" font-weight="700" textLength="155.0" lengthAdjust="spacingAndGlyphs">Luas-Balally</text><text x="4134.0" y="1633.0" font-size="29" fill="#7a4c32" font-weight="700" textLength="185.0" lengthAdjust="spacingAndGlyphs">Luas-Kilmacud</text><text x="2824.0" y="633.5" font-size="31" fill="#4e3a2c" font-weight="700" textLength="68.0" lengthAdjust="spacingAndGlyphs">rum</text><g opacity="0.8"><rect x="2637.5" y="445.5" width="68" height="39.5" fill="#f6f4ea" stroke="#9a9a9a" stroke-width="2.2"/><text x="2642.5" y="476.5" font-size="29.5" fill="#111" font-weight="700" textLength="58.0" lengthAdjust="spacingAndGlyphs">R112</text></g><g opacity="1"><rect x="3047.5" y="679" width="68" height="39.5" fill="#f6f4ea" stroke="#9a9a9a" stroke-width="2.2"/><text x="3052.5" y="710.0" font-size="29.5" fill="#111" font-weight="700" textLength="58.0" lengthAdjust="spacingAndGlyphs">R112</text></g><g opacity="0.65"><rect x="3299.7" y="663.5" width="68" height="39.5" fill="#f6f4ea" stroke="#9a9a9a" stroke-width="2.2"/><text x="3304.7" y="694.5" font-size="29.5" fill="#111" font-weight="700" textLength="58.0" lengthAdjust="spacingAndGlyphs">R112</text></g><g opacity="1"><rect x="4210" y="419" width="68" height="39.5" fill="#f6f4ea" stroke="#9a9a9a" stroke-width="2.2"/><text x="4215.0" y="450.0" font-size="29.5" fill="#111" font-weight="700" textLength="58.0" lengthAdjust="spacingAndGlyphs">R112</text></g><g opacity="0.85"><rect x="2879.8" y="939.8" width="68" height="39.5" fill="#f6f4ea" stroke="#9a9a9a" stroke-width="2.2"/><text x="2884.8" y="970.8" font-size="29.5" fill="#111" font-weight="700" textLength="58.0" lengthAdjust="spacingAndGlyphs">R117</text></g><g opacity="1"><rect x="4103.8" y="941" width="68" height="39.5" fill="#f6f4ea" stroke="#9a9a9a" stroke-width="2.2"/><text x="4108.8" y="972.0" font-size="29.5" fill="#111" font-weight="700" textLength="58.0" lengthAdjust="spacingAndGlyphs">R825</text></g><g opacity="1"><rect x="3293.6" y="1026.3" width="68" height="39.5" fill="#f6f4ea" stroke="#9a9a9a" stroke-width="2.2"/><text x="3298.6" y="1057.3" font-size="29.5" fill="#111" font-weight="700" textLength="58.0" lengthAdjust="spacingAndGlyphs">R826</text></g><g opacity="1"><rect x="2955.5" y="1581.5" width="68" height="39.5" fill="#f6f4ea" stroke="#9a9a9a" stroke-width="2.2"/><text x="2960.5" y="1612.5" font-size="29.5" fill="#111" font-weight="700" textLength="58.0" lengthAdjust="spacingAndGlyphs">R826</text></g><g opacity="0.85"><rect x="3457.8" y="1571.6" width="68" height="39.5" fill="#f6f4ea" stroke="#9a9a9a" stroke-width="2.2"/><text x="3462.8" y="1602.6" font-size="29.5" fill="#111" font-weight="700" textLength="58.0" lengthAdjust="spacingAndGlyphs">R117</text></g><path d="M2013,256C2061,271 2192,310 2301,345C2410,380 2598,440 2670,464C2742,488 2707,478 2734,492C2761,506 2780,518 2833,550C2886,582 3002,656 3050,682C3098,708 3086,708 3121,708C3156,708 3221,688 3257,684C3293,680 3286,682 3335,686C3384,690 3504,706 3548,707C3592,708 3575,709 3600,694C3625,679 3665,639 3700,616C3735,593 3790,565 3808,555" fill="none" stroke="#c1c1c1" stroke-width="19" stroke-linejoin="round" stroke-linecap="round" opacity="0.5"/><polyline points="2012,258 2005,389" fill="none" stroke="#c1c1c1" stroke-width="19" stroke-linejoin="round" stroke-linecap="round" opacity="0.5"/><path d="M2734,221C2734,254 2734,357 2736,420C2738,483 2742,553 2745,600C2748,647 2746,668 2755,700C2764,732 2780,756 2800,790C2820,824 2863,887 2876,906" fill="none" stroke="#c1c1c1" stroke-width="18" stroke-linejoin="round" stroke-linecap="round" opacity="0.5"/><path d="M2876,906C2882,914 2899,938 2911,956C2923,974 2927,995 2946,1015C2965,1035 2989,1050 3023,1077C3057,1104 3122,1150 3150,1174C3178,1198 3176,1198 3189,1218C3202,1238 3212,1258 3228,1292C3244,1326 3264,1381 3286,1420C3308,1459 3324,1494 3360,1525C3396,1556 3468,1580 3499,1606C3530,1632 3533,1655 3546,1682C3559,1709 3570,1752 3575,1766" fill="none" stroke="#c1c1c1" stroke-width="18" stroke-linejoin="round" stroke-linecap="round" opacity="0.5"/><path d="M2876,906C2882,914 2899,938 2911,956C2923,974 2927,995 2946,1015C2965,1035 2989,1050 3023,1077C3057,1104 3122,1150 3150,1174C3178,1198 3176,1198 3189,1218C3202,1238 3212,1258 3228,1292C3244,1326 3264,1381 3286,1420C3308,1459 3324,1494 3360,1525C3396,1556 3468,1580 3499,1606C3530,1632 3533,1655 3546,1682C3559,1709 3570,1752 3575,1766" fill="none" stroke="#c1c1c1" stroke-width="13" stroke-linejoin="round" stroke-linecap="round" opacity="0.45"/><path d="M2569,221C2586,252 2646,366 2668,407C2690,448 2680,444 2700,470C2720,496 2759,520 2790,560C2821,600 2846,650 2888,708C2930,766 2999,856 3043,910C3087,964 3119,982 3150,1030C3181,1078 3210,1162 3228,1195C3246,1228 3245,1219 3259,1230C3273,1241 3296,1248 3313,1261C3330,1274 3352,1300 3360,1308" fill="none" stroke="#cfcbc4" stroke-width="5" stroke-linejoin="round" stroke-linecap="round" /><path d="M2581,221C2598,252 2658,366 2680,407C2702,448 2691,441 2711,466C2731,491 2770,516 2801,556C2832,596 2857,648 2899,706C2941,764 3010,853 3054,906C3098,959 3142,1004 3160,1024" fill="none" stroke="#d9d5cf" stroke-width="4" stroke-linejoin="round" stroke-linecap="round" /><path d="M2171,1131C2206,1126 2296,1122 2383,1104C2470,1086 2622,1047 2693,1026C2764,1005 2779,990 2810,980C2841,970 2863,971 2880,968C2897,965 2907,963 2912,962" fill="none" stroke="#c1c1c1" stroke-width="22" stroke-linejoin="round" stroke-linecap="round" opacity="0.5"/><path d="M2694,1030C2696,1058 2699,1138 2705,1195C2711,1252 2721,1312 2732,1370C2743,1428 2759,1492 2771,1544C2783,1596 2797,1645 2806,1682C2815,1719 2823,1752 2826,1766" fill="none" stroke="#c1c1c1" stroke-width="18" stroke-linejoin="round" stroke-linecap="round" opacity="0.5"/><path d="M3630,221C3645,248 3691,333 3719,384C3747,435 3782,502 3800,528C3818,554 3811,513 3828,543C3845,573 3884,671 3902,708C3920,745 3930,756 3935,766" fill="none" stroke="#c1c1c1" stroke-width="18" stroke-linejoin="round" stroke-linecap="round" opacity="0.5"/><path d="M3047,221C3059,225 3095,246 3117,246C3139,246 3169,225 3179,221" fill="none" stroke="#c1c1c1" stroke-width="16" stroke-linejoin="round" stroke-linecap="round" opacity="0.5"/><polyline points="3935,766 4117,793 4179,883 4269,929 4292,958 4313,960" fill="none" stroke="#c1c1c1" stroke-width="18" stroke-linejoin="round" stroke-linecap="round" opacity=".5"/><polyline points="4313,966 4232,968 4211,1050 4141,1195 4082,1350 4004,1506 3953,1608" fill="none" stroke="#c1c1c1" stroke-width="18" stroke-linejoin="round" stroke-linecap="round" opacity=".5"/><path d="M3360,1308C3384,1329 3438,1395 3507,1436C3576,1477 3696,1527 3771,1556C3846,1585 3891,1596 3954,1610C4017,1624 4090,1632 4150,1641C4210,1650 4286,1662 4313,1666" fill="none" stroke="#c1c1c1" stroke-width="19" stroke-linejoin="round" stroke-linecap="round" opacity="0.5"/><path d="M3360,1308C3384,1329 3438,1395 3507,1436C3576,1477 3696,1527 3771,1556C3846,1585 3891,1596 3954,1610C4017,1624 4090,1632 4150,1641C4210,1650 4286,1662 4313,1666" fill="none" stroke="#c1c1c1" stroke-width="14" stroke-linejoin="round" stroke-linecap="round" opacity="0.45"/><polyline points="3360,1308 3296,1428" fill="none" stroke="#c1c1c1" stroke-width="19" stroke-linejoin="round" stroke-linecap="round" opacity="0.5"/><g transform="translate(2666.0,316.5) scale(0.9798,1.0000)" ><rect x="0" y="0" width="99" height="100" fill="#279b48"/><text x="11.0" y="29.3" font-size="29" fill="#fff" font-weight="700" textLength="7.5" lengthAdjust="spacingAndGlyphs" opacity=".93">3</text><text x="27.5" y="15.0" font-size="8" fill="#fff" font-weight="700" textLength="44.0" lengthAdjust="spacingAndGlyphs" opacity=".78">GOOD HEALTH</text><text x="27.5" y="28.0" font-size="8" fill="#fff" font-weight="700" textLength="50.0" lengthAdjust="spacingAndGlyphs" opacity=".78">AND WELL-BEING</text><path d="M12,64 H30 L36,52 L44,78 L50,60 L54,66 H62" fill="none" stroke="#fff" stroke-width="3"/><path d="M72,56 C76,50 86,52 86,60 C86,68 76,74 72,78 C68,74 58,68 58,60 C58,52 68,50 72,56 Z" fill="#fff"/></g><g transform="translate(2675.5,344.0) scale(0.9949,0.9950)" ><rect x="0" y="0" width="99" height="100" fill="#cf8d2a"/><text x="8.9" y="29.3" font-size="29" fill="#fff" font-weight="700" textLength="16.0" lengthAdjust="spacingAndGlyphs" opacity=".93">12</text><text x="31.5" y="15.0" font-size="8" fill="#fff" font-weight="700" textLength="44.6" lengthAdjust="spacingAndGlyphs" opacity=".78">RESPONSIBLE</text><text x="31.5" y="27.0" font-size="8" fill="#fff" font-weight="700" textLength="49.0" lengthAdjust="spacingAndGlyphs" opacity=".78">CONSUMPTION</text><text x="31.5" y="38.4" font-size="8" fill="#fff" font-weight="700" textLength="58.0" lengthAdjust="spacingAndGlyphs" opacity=".78">AND PRODUCTION</text><path d="M44,54 C38,48 24,48 21.5,62 C20,74 34,80 42,73 C48,68 52,60 57,55 C64,48 78,50 77,64 C76,77 62,80 56,73 C52,68 49,62 44,54" fill="none" stroke="#fff" stroke-width="5" stroke-linejoin="round"/><path d="M38,70 L46,70 L46,78 Z" fill="#fff"/></g><g transform="translate(2767.0,590.0) scale(0.9899,0.9800)" ><rect x="0" y="0" width="99" height="100" fill="#f99d26"/><text x="8.0" y="29.3" font-size="29" fill="#fff" font-weight="700" textLength="13.0" lengthAdjust="spacingAndGlyphs" opacity=".93">11</text><text x="27.0" y="15.0" font-size="8" fill="#fff" font-weight="700" textLength="58.0" lengthAdjust="spacingAndGlyphs" opacity=".78">SUSTAINABLE CITIES</text><text x="27.0" y="28.0" font-size="8" fill="#fff" font-weight="700" textLength="56.0" lengthAdjust="spacingAndGlyphs" opacity=".78">AND COMMUNITIES</text><rect x="35" y="40" width="14" height="48" fill="#fff"/><rect x="37.5" y="43" width="3.5" height="3.2" fill="#f99d26"/><rect x="43" y="43" width="3.5" height="3.2" fill="#f99d26"/><rect x="37.5" y="49" width="3.5" height="3.2" fill="#f99d26"/><rect x="43" y="49" width="3.5" height="3.2" fill="#f99d26"/><rect x="37.5" y="55" width="3.5" height="3.2" fill="#f99d26"/><rect x="43" y="55" width="3.5" height="3.2" fill="#f99d26"/><rect x="37.5" y="61" width="3.5" height="3.2" fill="#f99d26"/><rect x="43" y="61" width="3.5" height="3.2" fill="#f99d26"/><rect x="37.5" y="67" width="3.5" height="3.2" fill="#f99d26"/><rect x="43" y="67" width="3.5" height="3.2" fill="#f99d26"/><rect x="37.5" y="73" width="3.5" height="3.2" fill="#f99d26"/><rect x="43" y="73" width="3.5" height="3.2" fill="#f99d26"/><rect x="37.5" y="79" width="3.5" height="3.2" fill="#f99d26"/><rect x="43" y="79" width="3.5" height="3.2" fill="#f99d26"/><rect x="37.5" y="85" width="3.5" height="3.2" fill="#f99d26"/><rect x="43" y="85" width="3.5" height="3.2" fill="#f99d26"/><path d="M52,88 V66 L66,50 V88 Z" fill="#fff"/><path d="M56,88 V68 M60,88 V62 M52,72 H66 M52,79 H66" stroke="#f99d26" stroke-width="1.3"/><rect x="68" y="70" width="15" height="18" fill="#fff"/><rect x="70" y="74" width="4.5" height="8" fill="#f99d26"/><rect x="76.5" y="74" width="4.5" height="8" fill="#f99d26"/><path d="M16,88 V76 C16,70 31,70 31,76 V88 Z" fill="#fff"/><rect x="21" y="80" width="5" height="8" fill="#f99d26"/><rect x="21.5" y="64" width="4" height="7" fill="#fff"/></g><g transform="translate(2765.0,627.0) scale(1.0000,1.0050)" ><rect x="0" y="0" width="99" height="100" fill="#56c02b"/><text x="6.0" y="29.3" font-size="29" fill="#fff" font-weight="700" textLength="18.0" lengthAdjust="spacingAndGlyphs" opacity=".93">15</text><text x="31.5" y="15.0" font-size="8" fill="#fff" font-weight="700" textLength="13.0" lengthAdjust="spacingAndGlyphs" opacity=".78">LIFE</text><text x="31.5" y="28.0" font-size="8" fill="#fff" font-weight="700" textLength="28.0" lengthAdjust="spacingAndGlyphs" opacity=".78">ON LAND</text><path d="M39,40.5 C45,40.5 48,45 47,49 C52,51 52,58 48,60 C49,64 45,67 41,66 L41,78 H37 L37,66 C32,67 28,64 29,60 C25,58 25,51 30,49 C29,45 33,40.5 39,40.5 Z" fill="#fff"/><rect x="24.7" y="79.2" width="48" height="2.6" fill="#fff"/><rect x="24.7" y="83" width="48" height="2.6" fill="#fff" opacity=".85"/><rect x="24.7" y="86.8" width="48" height="2.4" fill="#fff" opacity=".7"/><path d="M56,48 L61,46 L64,43 L67,45 L71,44 M57,61 L62,60 L65,62 L70,60" stroke="#fff" stroke-width="1.6" fill="none" opacity=".9"/></g><g transform="translate(2693.0,561.0) scale(0.9747,0.9850)" ><rect x="0" y="0" width="99" height="100" fill="#eb1c2d"/><text x="11.0" y="29.3" font-size="29" fill="#fff" font-weight="700" textLength="7.5" lengthAdjust="spacingAndGlyphs" opacity=".93">1</text><text x="27.5" y="15.0" font-size="8" fill="#fff" font-weight="700" textLength="9.0" lengthAdjust="spacingAndGlyphs" opacity=".78">NO</text><text x="27.5" y="28.0" font-size="8" fill="#fff" font-weight="700" textLength="31.0" lengthAdjust="spacingAndGlyphs" opacity=".78">POVERTY</text><circle cx="17.6" cy="47.7" r="2.7" fill="#fff"/><path d="M12.1,51.2 H23.1 V62.8 H21.1 V77.0 H18.2 V64.7 H17.0 V77.0 H14.1 V62.8 H12.1 Z" fill="#fff"/><circle cx="40.6" cy="49.1" r="2.6" fill="#fff"/><path d="M36.8,52.5 H44.5 L47.4,67.7 H43.9 V77.0 H41.2 V67.7 H40.0 V77.0 H37.3 V67.7 H33.8 Z" fill="#fff"/><circle cx="55.7" cy="49.1" r="2.6" fill="#fff"/><path d="M51.9,52.5 H59.6 L62.5,67.7 H59.0 V77.0 H56.3 V67.7 H55.1 V77.0 H52.4 V67.7 H48.9 Z" fill="#fff"/><circle cx="77.2" cy="47.7" r="2.7" fill="#fff"/><path d="M71.7,51.2 H82.7 V62.8 H80.7 V77.0 H77.8 V64.7 H76.6 V77.0 H73.7 V62.8 H71.7 Z" fill="#fff"/><circle cx="29.0" cy="59.6" r="1.6" fill="#fff"/><path d="M25.8,62.0 H32.2 V68.9 H31.1 V77.0 H29.6 V70.0 H28.4 V77.0 H26.9 V68.9 H25.8 Z" fill="#fff"/><circle cx="67.0" cy="59.6" r="1.6" fill="#fff"/><path d="M63.8,62.0 H70.2 V68.9 H69.1 V77.0 H67.6 V70.0 H66.4 V77.0 H64.9 V68.9 H63.8 Z" fill="#fff"/><path d="M22,60 L27,66 M73,60 L69,66 M45,62 L51,62" stroke="#fff" stroke-width="2" fill="none"/></g><g transform="translate(2727.3,469.0) scale(0.9747,0.9880)" ><rect x="0" y="0" width="99" height="100" fill="#eb1c2d"/><text x="11.0" y="29.3" font-size="29" fill="#fff" font-weight="700" textLength="7.5" lengthAdjust="spacingAndGlyphs" opacity=".93">1</text><text x="27.5" y="15.0" font-size="8" fill="#fff" font-weight="700" textLength="9.0" lengthAdjust="spacingAndGlyphs" opacity=".78">NO</text><text x="27.5" y="28.0" font-size="8" fill="#fff" font-weight="700" textLength="31.0" lengthAdjust="spacingAndGlyphs" opacity=".78">POVERTY</text><circle cx="17.6" cy="47.7" r="2.7" fill="#fff"/><path d="M12.1,51.2 H23.1 V62.8 H21.1 V77.0 H18.2 V64.7 H17.0 V77.0 H14.1 V62.8 H12.1 Z" fill="#fff"/><circle cx="40.6" cy="49.1" r="2.6" fill="#fff"/><path d="M36.8,52.5 H44.5 L47.4,67.7 H43.9 V77.0 H41.2 V67.7 H40.0 V77.0 H37.3 V67.7 H33.8 Z" fill="#fff"/><circle cx="55.7" cy="49.1" r="2.6" fill="#fff"/><path d="M51.9,52.5 H59.6 L62.5,67.7 H59.0 V77.0 H56.3 V67.7 H55.1 V77.0 H52.4 V67.7 H48.9 Z" fill="#fff"/><circle cx="77.2" cy="47.7" r="2.7" fill="#fff"/><path d="M71.7,51.2 H82.7 V62.8 H80.7 V77.0 H77.8 V64.7 H76.6 V77.0 H73.7 V62.8 H71.7 Z" fill="#fff"/><circle cx="29.0" cy="59.6" r="1.6" fill="#fff"/><path d="M25.8,62.0 H32.2 V68.9 H31.1 V77.0 H29.6 V70.0 H28.4 V77.0 H26.9 V68.9 H25.8 Z" fill="#fff"/><circle cx="67.0" cy="59.6" r="1.6" fill="#fff"/><path d="M63.8,62.0 H70.2 V68.9 H69.1 V77.0 H67.6 V70.0 H66.4 V77.0 H64.9 V68.9 H63.8 Z" fill="#fff"/><path d="M22,60 L27,66 M73,60 L69,66 M45,62 L51,62" stroke="#fff" stroke-width="2" fill="none"/></g><g transform="translate(2636.7,529.5) scale(1.0000,1.0050)" ><rect x="0" y="0" width="99" height="100" fill="#56c02b"/><text x="6.0" y="29.3" font-size="29" fill="#fff" font-weight="700" textLength="18.0" lengthAdjust="spacingAndGlyphs" opacity=".93">15</text><text x="31.5" y="15.0" font-size="8" fill="#fff" font-weight="700" textLength="13.0" lengthAdjust="spacingAndGlyphs" opacity=".78">LIFE</text><text x="31.5" y="28.0" font-size="8" fill="#fff" font-weight="700" textLength="28.0" lengthAdjust="spacingAndGlyphs" opacity=".78">ON LAND</text><path d="M39,40.5 C45,40.5 48,45 47,49 C52,51 52,58 48,60 C49,64 45,67 41,66 L41,78 H37 L37,66 C32,67 28,64 29,60 C25,58 25,51 30,49 C29,45 33,40.5 39,40.5 Z" fill="#fff"/><rect x="24.7" y="79.2" width="48" height="2.6" fill="#fff"/><rect x="24.7" y="83" width="48" height="2.6" fill="#fff" opacity=".85"/><rect x="24.7" y="86.8" width="48" height="2.4" fill="#fff" opacity=".7"/><path d="M56,48 L61,46 L64,43 L67,45 L71,44 M57,61 L62,60 L65,62 L70,60" stroke="#fff" stroke-width="1.6" fill="none" opacity=".9"/></g><g transform="translate(2704.6,726.0) scale(0.9899,1.0000)" ><rect x="0" y="0" width="99" height="100" fill="#cf8d2a"/><text x="8.9" y="29.3" font-size="29" fill="#fff" font-weight="700" textLength="16.0" lengthAdjust="spacingAndGlyphs" opacity=".93">12</text><text x="31.5" y="15.0" font-size="8" fill="#fff" font-weight="700" textLength="44.6" lengthAdjust="spacingAndGlyphs" opacity=".78">RESPONSIBLE</text><text x="31.5" y="27.0" font-size="8" fill="#fff" font-weight="700" textLength="49.0" lengthAdjust="spacingAndGlyphs" opacity=".78">CONSUMPTION</text><text x="31.5" y="38.4" font-size="8" fill="#fff" font-weight="700" textLength="58.0" lengthAdjust="spacingAndGlyphs" opacity=".78">AND PRODUCTION</text><path d="M44,54 C38,48 24,48 21.5,62 C20,74 34,80 42,73 C48,68 52,60 57,55 C64,48 78,50 77,64 C76,77 62,80 56,73 C52,68 49,62 44,54" fill="none" stroke="#fff" stroke-width="5" stroke-linejoin="round"/><path d="M38,70 L46,70 L46,78 Z" fill="#fff"/></g><g transform="translate(2817.0,807.0) scale(1.0000,0.9930)" ><rect x="0" y="0" width="99" height="100" fill="#fdc30b"/><text x="11.0" y="29.3" font-size="29" fill="#fff" font-weight="700" textLength="7.5" lengthAdjust="spacingAndGlyphs" opacity=".93">7</text><text x="27.5" y="15.0" font-size="8" fill="#fff" font-weight="700" textLength="50.0" lengthAdjust="spacingAndGlyphs" opacity=".78">AFFORDABLE AND</text><text x="27.5" y="28.0" font-size="8" fill="#fff" font-weight="700" textLength="40.0" lengthAdjust="spacingAndGlyphs" opacity=".78">CLEAN ENERGY</text><circle cx="50" cy="63" r="12.5" fill="none" stroke="#fff" stroke-width="3.4"/><circle cx="50" cy="63" r="5" fill="none" stroke="#fff" stroke-width="2.6"/><line x1="66.5" y1="63.0" x2="74.0" y2="63.0" stroke="#fff" stroke-width="2.6"/><line x1="64.3" y1="71.2" x2="69.1" y2="74.0" stroke="#fff" stroke-width="2.6"/><line x1="58.2" y1="77.3" x2="62.0" y2="83.8" stroke="#fff" stroke-width="2.6"/><line x1="50.0" y1="79.5" x2="50.0" y2="85.0" stroke="#fff" stroke-width="2.6"/><line x1="41.8" y1="77.3" x2="38.0" y2="83.8" stroke="#fff" stroke-width="2.6"/><line x1="35.7" y1="71.2" x2="30.9" y2="74.0" stroke="#fff" stroke-width="2.6"/><line x1="33.5" y1="63.0" x2="26.0" y2="63.0" stroke="#fff" stroke-width="2.6"/><line x1="35.7" y1="54.8" x2="30.9" y2="52.0" stroke="#fff" stroke-width="2.6"/><line x1="41.7" y1="48.7" x2="38.0" y2="42.2" stroke="#fff" stroke-width="2.6"/><line x1="50.0" y1="46.5" x2="50.0" y2="41.0" stroke="#fff" stroke-width="2.6"/><line x1="58.2" y1="48.7" x2="62.0" y2="42.2" stroke="#fff" stroke-width="2.6"/><line x1="64.3" y1="54.7" x2="69.1" y2="52.0" stroke="#fff" stroke-width="2.6"/></g><g transform="translate(2731.4,673.5) scale(0.9929,0.9900)" ><rect x="0" y="0" width="99" height="100" fill="#eb1c2d"/><text x="11.0" y="29.3" font-size="29" fill="#fff" font-weight="700" textLength="7.5" lengthAdjust="spacingAndGlyphs" opacity=".93">1</text><text x="27.5" y="15.0" font-size="8" fill="#fff" font-weight="700" textLength="9.0" lengthAdjust="spacingAndGlyphs" opacity=".78">NO</text><text x="27.5" y="28.0" font-size="8" fill="#fff" font-weight="700" textLength="31.0" lengthAdjust="spacingAndGlyphs" opacity=".78">POVERTY</text><circle cx="17.6" cy="47.7" r="2.7" fill="#fff"/><path d="M12.1,51.2 H23.1 V62.8 H21.1 V77.0 H18.2 V64.7 H17.0 V77.0 H14.1 V62.8 H12.1 Z" fill="#fff"/><circle cx="40.6" cy="49.1" r="2.6" fill="#fff"/><path d="M36.8,52.5 H44.5 L47.4,67.7 H43.9 V77.0 H41.2 V67.7 H40.0 V77.0 H37.3 V67.7 H33.8 Z" fill="#fff"/><circle cx="55.7" cy="49.1" r="2.6" fill="#fff"/><path d="M51.9,52.5 H59.6 L62.5,67.7 H59.0 V77.0 H56.3 V67.7 H55.1 V77.0 H52.4 V67.7 H48.9 Z" fill="#fff"/><circle cx="77.2" cy="47.7" r="2.7" fill="#fff"/><path d="M71.7,51.2 H82.7 V62.8 H80.7 V77.0 H77.8 V64.7 H76.6 V77.0 H73.7 V62.8 H71.7 Z" fill="#fff"/><circle cx="29.0" cy="59.6" r="1.6" fill="#fff"/><path d="M25.8,62.0 H32.2 V68.9 H31.1 V77.0 H29.6 V70.0 H28.4 V77.0 H26.9 V68.9 H25.8 Z" fill="#fff"/><circle cx="67.0" cy="59.6" r="1.6" fill="#fff"/><path d="M63.8,62.0 H70.2 V68.9 H69.1 V77.0 H67.6 V70.0 H66.4 V77.0 H64.9 V68.9 H63.8 Z" fill="#fff"/><path d="M22,60 L27,66 M73,60 L69,66 M45,62 L51,62" stroke="#fff" stroke-width="2" fill="none"/></g><g transform="translate(2749.0,749.0) scale(1.0000,0.9970)" ><rect x="0" y="0" width="99" height="100" fill="#48773e"/><text x="6.0" y="29.3" font-size="29" fill="#fff" font-weight="700" textLength="18.0" lengthAdjust="spacingAndGlyphs" opacity=".93">13</text><text x="31.5" y="15.0" font-size="8" fill="#fff" font-weight="700" textLength="27.0" lengthAdjust="spacingAndGlyphs" opacity=".78">CLIMATE</text><text x="31.5" y="28.0" font-size="8" fill="#fff" font-weight="700" textLength="24.0" lengthAdjust="spacingAndGlyphs" opacity=".78">ACTION</text><path d="M12,62 C26,40 60,40 86,62 C60,84 26,84 12,62 Z" fill="#fff"/><circle cx="49" cy="62" r="14.5" fill="#48773e"/><path d="M42,54 C46,52 50,54 52,57 C50,60 46,60 44,63 C42,60 40,58 42,54 Z M52,62 C56,60 60,62 60,66 C58,70 54,72 51,70 C50,67 50,64 52,62 Z M40,66 C43,66 46,68 46,71 C43,73 40,70 40,66 Z" fill="#fff" opacity=".75"/></g><g transform="translate(2995.0,1082.7) scale(0.9848,1.0050)" ><rect x="0" y="0" width="99" height="100" fill="#fdc30b"/><text x="11.0" y="29.3" font-size="29" fill="#fff" font-weight="700" textLength="7.5" lengthAdjust="spacingAndGlyphs" opacity=".93">7</text><text x="27.5" y="15.0" font-size="8" fill="#fff" font-weight="700" textLength="50.0" lengthAdjust="spacingAndGlyphs" opacity=".78">AFFORDABLE AND</text><text x="27.5" y="28.0" font-size="8" fill="#fff" font-weight="700" textLength="40.0" lengthAdjust="spacingAndGlyphs" opacity=".78">CLEAN ENERGY</text><circle cx="50" cy="63" r="12.5" fill="none" stroke="#fff" stroke-width="3.4"/><circle cx="50" cy="63" r="5" fill="none" stroke="#fff" stroke-width="2.6"/><line x1="66.5" y1="63.0" x2="74.0" y2="63.0" stroke="#fff" stroke-width="2.6"/><line x1="64.3" y1="71.2" x2="69.1" y2="74.0" stroke="#fff" stroke-width="2.6"/><line x1="58.2" y1="77.3" x2="62.0" y2="83.8" stroke="#fff" stroke-width="2.6"/><line x1="50.0" y1="79.5" x2="50.0" y2="85.0" stroke="#fff" stroke-width="2.6"/><line x1="41.8" y1="77.3" x2="38.0" y2="83.8" stroke="#fff" stroke-width="2.6"/><line x1="35.7" y1="71.2" x2="30.9" y2="74.0" stroke="#fff" stroke-width="2.6"/><line x1="33.5" y1="63.0" x2="26.0" y2="63.0" stroke="#fff" stroke-width="2.6"/><line x1="35.7" y1="54.8" x2="30.9" y2="52.0" stroke="#fff" stroke-width="2.6"/><line x1="41.7" y1="48.7" x2="38.0" y2="42.2" stroke="#fff" stroke-width="2.6"/><line x1="50.0" y1="46.5" x2="50.0" y2="41.0" stroke="#fff" stroke-width="2.6"/><line x1="58.2" y1="48.7" x2="62.0" y2="42.2" stroke="#fff" stroke-width="2.6"/><line x1="64.3" y1="54.7" x2="69.1" y2="52.0" stroke="#fff" stroke-width="2.6"/></g><g transform="translate(2546.6,1321.3) scale(1.0000,1.0030)" ><rect x="0" y="0" width="99" height="100" fill="#f99d26"/><text x="8.0" y="29.3" font-size="29" fill="#fff" font-weight="700" textLength="13.0" lengthAdjust="spacingAndGlyphs" opacity=".93">11</text><text x="27.0" y="15.0" font-size="8" fill="#fff" font-weight="700" textLength="58.0" lengthAdjust="spacingAndGlyphs" opacity=".78">SUSTAINABLE CITIES</text><text x="27.0" y="28.0" font-size="8" fill="#fff" font-weight="700" textLength="56.0" lengthAdjust="spacingAndGlyphs" opacity=".78">AND COMMUNITIES</text><rect x="35" y="40" width="14" height="48" fill="#fff"/><rect x="37.5" y="43" width="3.5" height="3.2" fill="#f99d26"/><rect x="43" y="43" width="3.5" height="3.2" fill="#f99d26"/><rect x="37.5" y="49" width="3.5" height="3.2" fill="#f99d26"/><rect x="43" y="49" width="3.5" height="3.2" fill="#f99d26"/><rect x="37.5" y="55" width="3.5" height="3.2" fill="#f99d26"/><rect x="43" y="55" width="3.5" height="3.2" fill="#f99d26"/><rect x="37.5" y="61" width="3.5" height="3.2" fill="#f99d26"/><rect x="43" y="61" width="3.5" height="3.2" fill="#f99d26"/><rect x="37.5" y="67" width="3.5" height="3.2" fill="#f99d26"/><rect x="43" y="67" width="3.5" height="3.2" fill="#f99d26"/><rect x="37.5" y="73" width="3.5" height="3.2" fill="#f99d26"/><rect x="43" y="73" width="3.5" height="3.2" fill="#f99d26"/><rect x="37.5" y="79" width="3.5" height="3.2" fill="#f99d26"/><rect x="43" y="79" width="3.5" height="3.2" fill="#f99d26"/><rect x="37.5" y="85" width="3.5" height="3.2" fill="#f99d26"/><rect x="43" y="85" width="3.5" height="3.2" fill="#f99d26"/><path d="M52,88 V66 L66,50 V88 Z" fill="#fff"/><path d="M56,88 V68 M60,88 V62 M52,72 H66 M52,79 H66" stroke="#f99d26" stroke-width="1.3"/><rect x="68" y="70" width="15" height="18" fill="#fff"/><rect x="70" y="74" width="4.5" height="8" fill="#f99d26"/><rect x="76.5" y="74" width="4.5" height="8" fill="#f99d26"/><path d="M16,88 V76 C16,70 31,70 31,76 V88 Z" fill="#fff"/><rect x="21" y="80" width="5" height="8" fill="#f99d26"/><rect x="21.5" y="64" width="4" height="7" fill="#fff"/></g><g transform="translate(1762.3,1587.2) scale(1.0030,1.0050)" ><rect x="0" y="0" width="99" height="100" fill="#eb1c2d"/><text x="11.0" y="29.3" font-size="29" fill="#fff" font-weight="700" textLength="7.5" lengthAdjust="spacingAndGlyphs" opacity=".93">1</text><text x="27.5" y="15.0" font-size="8" fill="#fff" font-weight="700" textLength="9.0" lengthAdjust="spacingAndGlyphs" opacity=".78">NO</text><text x="27.5" y="28.0" font-size="8" fill="#fff" font-weight="700" textLength="31.0" lengthAdjust="spacingAndGlyphs" opacity=".78">POVERTY</text><circle cx="17.6" cy="47.7" r="2.7" fill="#fff"/><path d="M12.1,51.2 H23.1 V62.8 H21.1 V77.0 H18.2 V64.7 H17.0 V77.0 H14.1 V62.8 H12.1 Z" fill="#fff"/><circle cx="40.6" cy="49.1" r="2.6" fill="#fff"/><path d="M36.8,52.5 H44.5 L47.4,67.7 H43.9 V77.0 H41.2 V67.7 H40.0 V77.0 H37.3 V67.7 H33.8 Z" fill="#fff"/><circle cx="55.7" cy="49.1" r="2.6" fill="#fff"/><path d="M51.9,52.5 H59.6 L62.5,67.7 H59.0 V77.0 H56.3 V67.7 H55.1 V77.0 H52.4 V67.7 H48.9 Z" fill="#fff"/><circle cx="77.2" cy="47.7" r="2.7" fill="#fff"/><path d="M71.7,51.2 H82.7 V62.8 H80.7 V77.0 H77.8 V64.7 H76.6 V77.0 H73.7 V62.8 H71.7 Z" fill="#fff"/><circle cx="29.0" cy="59.6" r="1.6" fill="#fff"/><path d="M25.8,62.0 H32.2 V68.9 H31.1 V77.0 H29.6 V70.0 H28.4 V77.0 H26.9 V68.9 H25.8 Z" fill="#fff"/><circle cx="67.0" cy="59.6" r="1.6" fill="#fff"/><path d="M63.8,62.0 H70.2 V68.9 H69.1 V77.0 H67.6 V70.0 H66.4 V77.0 H64.9 V68.9 H63.8 Z" fill="#fff"/><path d="M22,60 L27,66 M73,60 L69,66 M45,62 L51,62" stroke="#fff" stroke-width="2" fill="none"/></g><g transform="translate(3173.2,1283.6) scale(0.9949,1.0060)" ><rect x="0" y="0" width="99" height="100" fill="#56c02b"/><text x="6.0" y="29.3" font-size="29" fill="#fff" font-weight="700" textLength="18.0" lengthAdjust="spacingAndGlyphs" opacity=".93">15</text><text x="31.5" y="15.0" font-size="8" fill="#fff" font-weight="700" textLength="13.0" lengthAdjust="spacingAndGlyphs" opacity=".78">LIFE</text><text x="31.5" y="28.0" font-size="8" fill="#fff" font-weight="700" textLength="28.0" lengthAdjust="spacingAndGlyphs" opacity=".78">ON LAND</text><path d="M39,40.5 C45,40.5 48,45 47,49 C52,51 52,58 48,60 C49,64 45,67 41,66 L41,78 H37 L37,66 C32,67 28,64 29,60 C25,58 25,51 30,49 C29,45 33,40.5 39,40.5 Z" fill="#fff"/><rect x="24.7" y="79.2" width="48" height="2.6" fill="#fff"/><rect x="24.7" y="83" width="48" height="2.6" fill="#fff" opacity=".85"/><rect x="24.7" y="86.8" width="48" height="2.4" fill="#fff" opacity=".7"/><path d="M56,48 L61,46 L64,43 L67,45 L71,44 M57,61 L62,60 L65,62 L70,60" stroke="#fff" stroke-width="1.6" fill="none" opacity=".9"/></g><g transform="translate(3535.3,1108.5) scale(0.9970,1.0000)" ><rect x="0" y="0" width="99" height="100" fill="#56c02b"/><text x="6.0" y="29.3" font-size="29" fill="#fff" font-weight="700" textLength="18.0" lengthAdjust="spacingAndGlyphs" opacity=".93">15</text><text x="31.5" y="15.0" font-size="8" fill="#fff" font-weight="700" textLength="13.0" lengthAdjust="spacingAndGlyphs" opacity=".78">LIFE</text><text x="31.5" y="28.0" font-size="8" fill="#fff" font-weight="700" textLength="28.0" lengthAdjust="spacingAndGlyphs" opacity=".78">ON LAND</text><path d="M39,40.5 C45,40.5 48,45 47,49 C52,51 52,58 48,60 C49,64 45,67 41,66 L41,78 H37 L37,66 C32,67 28,64 29,60 C25,58 25,51 30,49 C29,45 33,40.5 39,40.5 Z" fill="#fff"/><rect x="24.7" y="79.2" width="48" height="2.6" fill="#fff"/><rect x="24.7" y="83" width="48" height="2.6" fill="#fff" opacity=".85"/><rect x="24.7" y="86.8" width="48" height="2.4" fill="#fff" opacity=".7"/><path d="M56,48 L61,46 L64,43 L67,45 L71,44 M57,61 L62,60 L65,62 L70,60" stroke="#fff" stroke-width="1.6" fill="none" opacity=".9"/></g><g transform="translate(3408.0,1127.5) scale(0.9929,1.0000)" ><rect x="0" y="0" width="99" height="100" fill="#cf8d2a"/><text x="8.9" y="29.3" font-size="29" fill="#fff" font-weight="700" textLength="16.0" lengthAdjust="spacingAndGlyphs" opacity=".93">12</text><text x="31.5" y="15.0" font-size="8" fill="#fff" font-weight="700" textLength="44.6" lengthAdjust="spacingAndGlyphs" opacity=".78">RESPONSIBLE</text><text x="31.5" y="27.0" font-size="8" fill="#fff" font-weight="700" textLength="49.0" lengthAdjust="spacingAndGlyphs" opacity=".78">CONSUMPTION</text><text x="31.5" y="38.4" font-size="8" fill="#fff" font-weight="700" textLength="58.0" lengthAdjust="spacingAndGlyphs" opacity=".78">AND PRODUCTION</text><path d="M44,54 C38,48 24,48 21.5,62 C20,74 34,80 42,73 C48,68 52,60 57,55 C64,48 78,50 77,64 C76,77 62,80 56,73 C52,68 49,62 44,54" fill="none" stroke="#fff" stroke-width="5" stroke-linejoin="round"/><path d="M38,70 L46,70 L46,78 Z" fill="#fff"/></g><g transform="translate(3541.0,1059.2) scale(0.9899,0.9900)" ><rect x="0" y="0" width="99" height="100" fill="#dd1367"/><text x="6.0" y="29.3" font-size="29" fill="#fff" font-weight="700" textLength="18.0" lengthAdjust="spacingAndGlyphs" opacity=".93">10</text><text x="31.5" y="15.0" font-size="8" fill="#fff" font-weight="700" textLength="28.0" lengthAdjust="spacingAndGlyphs" opacity=".78">REDUCED</text><text x="31.5" y="28.0" font-size="8" fill="#fff" font-weight="700" textLength="40.0" lengthAdjust="spacingAndGlyphs" opacity=".78">INEQUALITIES</text><circle cx="50" cy="65" r="14" fill="none" stroke="#fff" stroke-width="3"/><path d="M43,61 H57 M43,69 H57" stroke="#fff" stroke-width="3.4"/><path d="M50,42 L44,48 H56 Z M50,88 L44,82 H56 Z M27,65 L33,59 V71 Z M73,65 L67,59 V71 Z" fill="#fff"/></g><g transform="translate(3499.5,1085.2) scale(0.9899,1.0020)" ><rect x="0" y="0" width="99" height="100" fill="#dda63a"/><text x="11.0" y="29.3" font-size="29" fill="#fff" font-weight="700" textLength="7.5" lengthAdjust="spacingAndGlyphs" opacity=".93">2</text><text x="27.5" y="15.0" font-size="8" fill="#fff" font-weight="700" textLength="14.0" lengthAdjust="spacingAndGlyphs" opacity=".78">ZERO</text><text x="27.5" y="28.0" font-size="8" fill="#fff" font-weight="700" textLength="22.0" lengthAdjust="spacingAndGlyphs" opacity=".78">HUNGER</text><path d="M22,66 H78 C78,80 66,88 50,88 C34,88 22,80 22,66 Z" fill="#fff"/><path d="M36,60 C32,54 40,52 36,44 M48,60 C44,54 52,52 48,44" fill="none" stroke="#fff" stroke-width="3"/></g><g transform="translate(3540.3,1087.8) scale(0.9899,0.9750)" ><rect x="0" y="0" width="99" height="100" fill="#cf8d2a"/><text x="8.9" y="29.3" font-size="29" fill="#fff" font-weight="700" textLength="16.0" lengthAdjust="spacingAndGlyphs" opacity=".93">12</text><text x="31.5" y="15.0" font-size="8" fill="#fff" font-weight="700" textLength="44.6" lengthAdjust="spacingAndGlyphs" opacity=".78">RESPONSIBLE</text><text x="31.5" y="27.0" font-size="8" fill="#fff" font-weight="700" textLength="49.0" lengthAdjust="spacingAndGlyphs" opacity=".78">CONSUMPTION</text><text x="31.5" y="38.4" font-size="8" fill="#fff" font-weight="700" textLength="58.0" lengthAdjust="spacingAndGlyphs" opacity=".78">AND PRODUCTION</text><path d="M44,54 C38,48 24,48 21.5,62 C20,74 34,80 42,73 C48,68 52,60 57,55 C64,48 78,50 77,64 C76,77 62,80 56,73 C52,68 49,62 44,54" fill="none" stroke="#fff" stroke-width="5" stroke-linejoin="round"/><path d="M38,70 L46,70 L46,78 Z" fill="#fff"/></g><g transform="translate(3585.0,1094.0) scale(1.0000,0.9980)" ><rect x="0" y="0" width="99" height="100" fill="#cf8d2a"/><text x="8.9" y="29.3" font-size="29" fill="#fff" font-weight="700" textLength="16.0" lengthAdjust="spacingAndGlyphs" opacity=".93">12</text><text x="31.5" y="15.0" font-size="8" fill="#fff" font-weight="700" textLength="44.6" lengthAdjust="spacingAndGlyphs" opacity=".78">RESPONSIBLE</text><text x="31.5" y="27.0" font-size="8" fill="#fff" font-weight="700" textLength="49.0" lengthAdjust="spacingAndGlyphs" opacity=".78">CONSUMPTION</text><text x="31.5" y="38.4" font-size="8" fill="#fff" font-weight="700" textLength="58.0" lengthAdjust="spacingAndGlyphs" opacity=".78">AND PRODUCTION</text><path d="M44,54 C38,48 24,48 21.5,62 C20,74 34,80 42,73 C48,68 52,60 57,55 C64,48 78,50 77,64 C76,77 62,80 56,73 C52,68 49,62 44,54" fill="none" stroke="#fff" stroke-width="5" stroke-linejoin="round"/><path d="M38,70 L46,70 L46,78 Z" fill="#fff"/></g><g transform="translate(3327.8,1033.0) scale(0.9798,0.9900)" ><rect x="0" y="0" width="99" height="100" fill="#eb1c2d"/><text x="11.0" y="29.3" font-size="29" fill="#fff" font-weight="700" textLength="7.5" lengthAdjust="spacingAndGlyphs" opacity=".93">1</text><text x="27.5" y="15.0" font-size="8" fill="#fff" font-weight="700" textLength="9.0" lengthAdjust="spacingAndGlyphs" opacity=".78">NO</text><text x="27.5" y="28.0" font-size="8" fill="#fff" font-weight="700" textLength="31.0" lengthAdjust="spacingAndGlyphs" opacity=".78">POVERTY</text><circle cx="17.6" cy="47.7" r="2.7" fill="#fff"/><path d="M12.1,51.2 H23.1 V62.8 H21.1 V77.0 H18.2 V64.7 H17.0 V77.0 H14.1 V62.8 H12.1 Z" fill="#fff"/><circle cx="40.6" cy="49.1" r="2.6" fill="#fff"/><path d="M36.8,52.5 H44.5 L47.4,67.7 H43.9 V77.0 H41.2 V67.7 H40.0 V77.0 H37.3 V67.7 H33.8 Z" fill="#fff"/><circle cx="55.7" cy="49.1" r="2.6" fill="#fff"/><path d="M51.9,52.5 H59.6 L62.5,67.7 H59.0 V77.0 H56.3 V67.7 H55.1 V77.0 H52.4 V67.7 H48.9 Z" fill="#fff"/><circle cx="77.2" cy="47.7" r="2.7" fill="#fff"/><path d="M71.7,51.2 H82.7 V62.8 H80.7 V77.0 H77.8 V64.7 H76.6 V77.0 H73.7 V62.8 H71.7 Z" fill="#fff"/><circle cx="29.0" cy="59.6" r="1.6" fill="#fff"/><path d="M25.8,62.0 H32.2 V68.9 H31.1 V77.0 H29.6 V70.0 H28.4 V77.0 H26.9 V68.9 H25.8 Z" fill="#fff"/><circle cx="67.0" cy="59.6" r="1.6" fill="#fff"/><path d="M63.8,62.0 H70.2 V68.9 H69.1 V77.0 H67.6 V70.0 H66.4 V77.0 H64.9 V68.9 H63.8 Z" fill="#fff"/><path d="M22,60 L27,66 M73,60 L69,66 M45,62 L51,62" stroke="#fff" stroke-width="2" fill="none"/></g><g transform="translate(3457.0,957.5) scale(1.0030,1.0020)" ><rect x="0" y="0" width="99" height="100" fill="#cf8d2a"/><text x="8.9" y="29.3" font-size="29" fill="#fff" font-weight="700" textLength="16.0" lengthAdjust="spacingAndGlyphs" opacity=".93">12</text><text x="31.5" y="15.0" font-size="8" fill="#fff" font-weight="700" textLength="44.6" lengthAdjust="spacingAndGlyphs" opacity=".78">RESPONSIBLE</text><text x="31.5" y="27.0" font-size="8" fill="#fff" font-weight="700" textLength="49.0" lengthAdjust="spacingAndGlyphs" opacity=".78">CONSUMPTION</text><text x="31.5" y="38.4" font-size="8" fill="#fff" font-weight="700" textLength="58.0" lengthAdjust="spacingAndGlyphs" opacity=".78">AND PRODUCTION</text><path d="M44,54 C38,48 24,48 21.5,62 C20,74 34,80 42,73 C48,68 52,60 57,55 C64,48 78,50 77,64 C76,77 62,80 56,73 C52,68 49,62 44,54" fill="none" stroke="#fff" stroke-width="5" stroke-linejoin="round"/><path d="M38,70 L46,70 L46,78 Z" fill="#fff"/></g><g transform="translate(3377.0,997.0) scale(0.9939,1.0260)" ><rect x="0" y="0" width="99" height="100" fill="#3a4284"/><text x="6.0" y="29.3" font-size="29" fill="#fff" font-weight="700" textLength="18.0" lengthAdjust="spacingAndGlyphs" opacity=".93">17</text><text x="31.5" y="15.0" font-size="8" fill="#fff" font-weight="700" textLength="44.0" lengthAdjust="spacingAndGlyphs" opacity=".78">PARTNERSHIPS</text><text x="31.5" y="28.0" font-size="8" fill="#fff" font-weight="700" textLength="48.0" lengthAdjust="spacingAndGlyphs" opacity=".78">FOR THE GOALS</text><circle cx="50.0" cy="54.0" r="13" fill="none" stroke="#e8d8f2" stroke-width="2.6"/><circle cx="60.5" cy="61.6" r="13" fill="none" stroke="#e8d8f2" stroke-width="2.6"/><circle cx="56.5" cy="73.9" r="13" fill="none" stroke="#e8d8f2" stroke-width="2.6"/><circle cx="43.5" cy="73.9" r="13" fill="none" stroke="#e8d8f2" stroke-width="2.6"/><circle cx="39.5" cy="61.6" r="13" fill="none" stroke="#e8d8f2" stroke-width="2.6"/></g><rect x="3377" y="997" width="98.4" height="102.6" fill="none" stroke="#f0a8f0" stroke-width="2.5"/><g transform="translate(3317.0,960.5) scale(0.9949,1.0070)" ><rect x="0" y="0" width="99" height="100" fill="#56c02b"/><text x="6.0" y="29.3" font-size="29" fill="#fff" font-weight="700" textLength="18.0" lengthAdjust="spacingAndGlyphs" opacity=".93">15</text><text x="31.5" y="15.0" font-size="8" fill="#fff" font-weight="700" textLength="13.0" lengthAdjust="spacingAndGlyphs" opacity=".78">LIFE</text><text x="31.5" y="28.0" font-size="8" fill="#fff" font-weight="700" textLength="28.0" lengthAdjust="spacingAndGlyphs" opacity=".78">ON LAND</text><path d="M39,40.5 C45,40.5 48,45 47,49 C52,51 52,58 48,60 C49,64 45,67 41,66 L41,78 H37 L37,66 C32,67 28,64 29,60 C25,58 25,51 30,49 C29,45 33,40.5 39,40.5 Z" fill="#fff"/><rect x="24.7" y="79.2" width="48" height="2.6" fill="#fff"/><rect x="24.7" y="83" width="48" height="2.6" fill="#fff" opacity=".85"/><rect x="24.7" y="86.8" width="48" height="2.4" fill="#fff" opacity=".7"/><path d="M56,48 L61,46 L64,43 L67,45 L71,44 M57,61 L62,60 L65,62 L70,60" stroke="#fff" stroke-width="1.6" fill="none" opacity=".9"/></g><rect x="3377" y="997" width="38.5" height="64.2" fill="#6aaa46"/><path d="M3377,997 H3415.5 M3377,997 V1061" stroke="#8a6a8a" stroke-width="2" fill="none" opacity=".6"/><path d="M3373,1003 L3380,1001 L3384,998 L3388,1000 M3373,1021 L3380,1020 L3385,1022 L3390,1020" stroke="#fff" stroke-width="1.6" fill="none" opacity=".55"/><rect x="3366" y="1040" width="40" height="3" fill="#fff" opacity=".85"/><rect x="3366" y="1045" width="40" height="3" fill="#fff" opacity=".7"/><rect x="830" y="1716.5" width="3484" height="50" fill="#fff" opacity=".68"/><text x="849.0" y="1750.3" font-size="32" fill="#5a5a5a" textLength="1618.0" lengthAdjust="spacingAndGlyphs">Esri Community Maps Contributors, Esri UK, Esri, HERE, Garmin, GeoTechnologies, Inc, METI/NASA, USGS</text><text x="4053.6" y="1750.3" font-size="32" fill="#5a5a5a" textLength="243.0" lengthAdjust="spacingAndGlyphs">Powered by Esri</text><rect x="4095.5" y="268.5" width="174" height="90" fill="#fff" stroke="#0079c1" stroke-width="2.6"/><line x1="4183.5" y1="268" x2="4183.5" y2="359" stroke="#0079c1" stroke-width="2.6"/><rect x="4134" y="296.2" width="26" height="2.6" fill="#0079c1"/><rect x="4119.5" y="293.5" width="8" height="8" fill="#0079c1"/><rect x="4134" y="308.2" width="26" height="2.6" fill="#0079c1"/><circle cx="4123.5" cy="309.5" r="3.8" fill="#0079c1"/><rect x="4134" y="319.7" width="26" height="2.6" fill="#0079c1"/><rect x="4119.5" y="317" width="8" height="8" fill="#0079c1"/><rect x="4134" y="331.7" width="26" height="2.6" fill="#0079c1"/><path d="M4119.5,336.5 L4123.5,329 L4127.5,336.5 Z" fill="#0079c1"/><g fill="none" stroke="#0079c1" stroke-width="2.6" stroke-linejoin="miter"><path d="M4204,307 L4225,294.5 L4246,307 L4225,319.5 Z"/><path d="M4204,317.5 L4225,330 L4246,317.5"/><path d="M4204,326 L4225,338.5 L4246,326"/></g><rect x="4179.5" y="1492" width="91" height="184.5" fill="#fff" filter="url(#zsh)"/><rect x="4179.5" y="1584.5" width="91" height="2" fill="#e0e0e0"/><path d="M4203.5,1536.5 H4246 M4224.7,1515.3 V1557.7 M4203.5,1631.6 H4246" stroke="#6a6a6a" stroke-width="2.6" fill="none"/></svg></div>
<div id="popup" style="position:absolute;left:875px;top:390px;width:1295px;height:1028px;background:#fff;box-shadow:0 2px 14px 2px rgba(0,0,0,.45)"></div>
<svg style="position:absolute;left:875px;top:390px" width="1295" height="1028" viewBox="875 390 1295 1028"><rect x="875" y="540.5" width="1295" height="2.5" fill="#d4d4d4"/><g fill="none" stroke="#787878" stroke-width="2.8" stroke-linecap="round"><circle cx="939.5" cy="458" r="15"/><path d="M950.5,469 L965,483.5"/><path d="M932,458 H947 M939.5,450.5 V465.5" stroke-width="2.4"/></g><text x="978.0" y="472.2" font-size="33.5" fill="#787878" textLength="127.6" lengthAdjust="spacingAndGlyphs">Zoom to</text><g fill="none" stroke="#787878" stroke-width="2.6" stroke-linecap="round" stroke-linejoin="round"><path d="M1155.5,462.5 H1194.5 M1175,443 V482"/><path d="M1161.5,456.5 L1155.5,462.5 L1161.5,468.5 M1188.5,456.5 L1194.5,462.5 L1188.5,468.5 M1169,449 L1175,443 L1181,449 M1169,476 L1175,482 L1181,476"/></g><text x="1209.5" y="472.2" font-size="33.5" fill="#787878" textLength="51.5" lengthAdjust="spacingAndGlyphs">Pan</text><text x="917.0" y="623.3" font-size="44.5" fill="#323232" font-weight="700" textLength="315.5" lengthAdjust="spacingAndGlyphs">Dundrum 2030</text><path d="M2092,590 L2125.5,623.5 M2125.5,590 L2092,623.5" stroke="#5a5a5a" stroke-width="3" fill="none" stroke-linecap="round"/><clipPath id="tclip"><rect x="938" y="673" width="1195" height="712.5"/></clipPath><g clip-path="url(#tclip)"><rect x="938.3" y="673" width="1153.2" height="86.6" fill="#ededed"/><rect x="1509.8" y="673" width="9" height="86.6" fill="#e3e3e3"/><rect x="938.3" y="759.6" width="1153.2" height="86.0" fill="#fafafa"/><rect x="1509.8" y="759.6" width="9" height="86.0" fill="#f0f0f0"/><rect x="938.3" y="845.6" width="1153.2" height="298.2" fill="#ededed"/><rect x="1509.8" y="845.6" width="9" height="298.2" fill="#e3e3e3"/><rect x="938.3" y="1143.8" width="1153.2" height="356.2" fill="#fafafa"/><rect x="1509.8" y="1143.8" width="9" height="356.2" fill="#f0f0f0"/><rect x="2108.7" y="673" width="19" height="720" fill="#e2e2e2"/><rect x="2108.7" y="673" width="19" height="183.5" fill="#c6c6c6"/><text x="962.0" y="725.5" font-size="33" fill="#555" textLength="102.0" lengthAdjust="spacingAndGlyphs">Led by</text><text x="1542.0" y="725.5" font-size="33" fill="#555" textLength="225.7" lengthAdjust="spacingAndGlyphs">Dundrum2030</text><text x="962.0" y="813.0" font-size="33" fill="#555" textLength="153.0" lengthAdjust="spacingAndGlyphs">Main SDG</text><text x="1542.0" y="813.0" font-size="33" fill="#555" textLength="498.5" lengthAdjust="spacingAndGlyphs">SDG17 Partnership for the Goals</text><text x="962.0" y="901.0" font-size="33" fill="#555" textLength="194.5" lengthAdjust="spacingAndGlyphs">Related SDG</text><text x="1542.0" y="901.0" font-size="33" fill="#555" textLength="457.0" lengthAdjust="spacingAndGlyphs">SDG11 Sustainable Cities and</text><text x="1542.0" y="954.0" font-size="33" fill="#555" textLength="331.0" lengthAdjust="spacingAndGlyphs">Communities, SDG12</text><text x="1542.0" y="1007.5" font-size="33" fill="#555" textLength="474.0" lengthAdjust="spacingAndGlyphs">Responsible Consumption and</text><text x="1542.0" y="1059.5" font-size="33" fill="#555" textLength="423.0" lengthAdjust="spacingAndGlyphs">Production; SDG13 Climate</text><text x="1542.0" y="1113.0" font-size="33" fill="#555" textLength="425.0" lengthAdjust="spacingAndGlyphs">Action; SDG15 Life on Land</text><text x="962.0" y="1199.7" font-size="33" fill="#555" textLength="175.6" lengthAdjust="spacingAndGlyphs">Description</text><text x="1542.0" y="1199.7" font-size="33" fill="#555" textLength="470.5" lengthAdjust="spacingAndGlyphs">Membership of Dundrum2030</text><text x="1542.0" y="1251.5" font-size="33" fill="#555" textLength="479.0" lengthAdjust="spacingAndGlyphs">provides linkage across various</text><text x="1542.0" y="1305.0" font-size="33" fill="#555" textLength="474.0" lengthAdjust="spacingAndGlyphs">SDG actions, including patrons</text><text x="1542.0" y="1357.5" font-size="33" fill="#555" textLength="439.6" lengthAdjust="spacingAndGlyphs">working with Dundrum2030,</text><text x="1542.0" y="1410.5" font-size="33" fill="#555" textLength="418.0" lengthAdjust="spacingAndGlyphs">county councils and others</text></g></svg>
<div id="howto" style="position:absolute;left:831px;top:1793px;width:3464px;height:283px;background:#00734c"></div>
<div id="howto-sb" style="position:absolute;left:4295px;top:1793px;width:19px;height:283px;background:#c8c8c8"></div>
<svg style="position:absolute;left:831px;top:1793px" width="3483" height="283" viewBox="831 1793 3483 283"><text x="852.0" y="1852.5" font-size="44.5" fill="#fff" font-weight="700" textLength="663.6" lengthAdjust="spacingAndGlyphs">How to Use the SDG Dashboard</text><text x="1528.8" y="1852.5" font-size="32.5" fill="#fff" font-weight="700" textLength="421.0" lengthAdjust="spacingAndGlyphs">(for a video demonstration,</text><text x="1960.0" y="1852.5" font-size="32.5" fill="#f4f0a8" font-weight="700" textLength="145.3" lengthAdjust="spacingAndGlyphs">click here</text><text x="2106.0" y="1852.5" font-size="32.5" fill="#fff" font-weight="700">)</text><text x="852.0" y="1903.0" font-size="32.5" fill="#fff" font-weight="700" textLength="27.0" lengthAdjust="spacingAndGlyphs">1.</text><text x="888.0" y="1903.0" font-size="32.5" fill="#fff" textLength="352.3" lengthAdjust="spacingAndGlyphs">Zoom in to an area and</text><text x="1251.5" y="1903.0" font-size="32.5" fill="#fff" font-weight="700" textLength="913.3" lengthAdjust="spacingAndGlyphs">click on each icon on the map to obtain further information</text><text x="2175.0" y="1903.0" font-size="32.5" fill="#fff" textLength="1363.5" lengthAdjust="spacingAndGlyphs">and contact details for each of the sustainable initiatives in the community. Get engaged!</text><text x="852.0" y="1952.8" font-size="32.5" fill="#fff" font-weight="700" textLength="27.0" lengthAdjust="spacingAndGlyphs">2.</text><text x="890.0" y="1952.8" font-size="32.5" fill="#fff" textLength="428.7" lengthAdjust="spacingAndGlyphs">On the top right of the map,</text><text x="1329.8" y="1952.8" font-size="32.5" fill="#fff" font-weight="700" textLength="1452.0" lengthAdjust="spacingAndGlyphs">click on the layer list button to select the SDG indicator layer you want to display and explore.</text><text x="2793.7" y="1952.8" font-size="32.5" fill="#fff" textLength="790.0" lengthAdjust="spacingAndGlyphs">This will map current data for the selected indicator.</text><text x="852.0" y="2001.3" font-size="32.5" fill="#fff" font-weight="700" textLength="1329.0" lengthAdjust="spacingAndGlyphs">3. Click on the legend button to better understand the colours for each indicator map.</text><text x="2192.0" y="2001.3" font-size="32.5" fill="#fff" textLength="2071.5" lengthAdjust="spacingAndGlyphs">You can also learn more about each area by clicking on the displayed map - the pop up windows will provide detailed data and graphs.</text></svg>
<div style="position:absolute;left:14px;top:2099px;width:4317px;height:5px;background:#d0d0d0"></div>
<div style="position:absolute;left:291px;top:2099px;width:138px;height:5px;background:#ececec"></div>
</div>
</body></html>
